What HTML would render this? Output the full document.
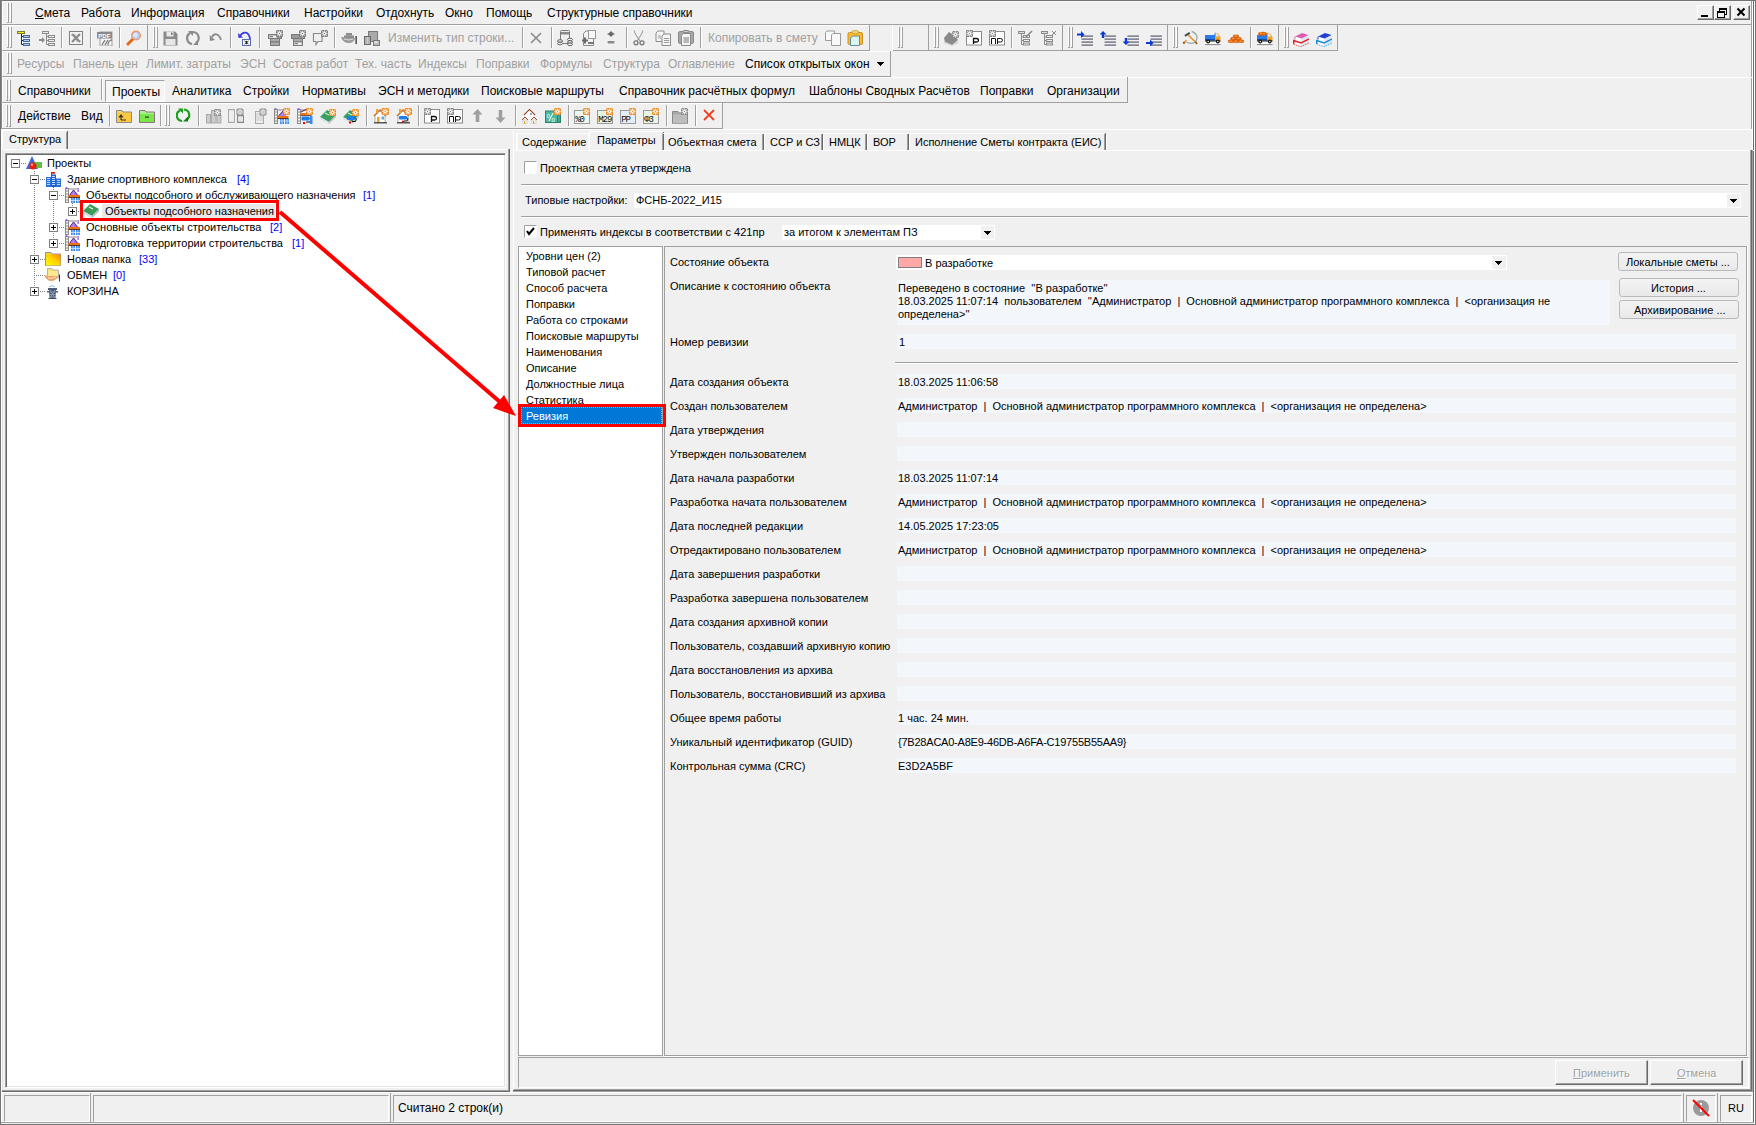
<!DOCTYPE html>
<html><head><meta charset="utf-8"><style>
html,body{margin:0;padding:0;width:1756px;height:1125px;overflow:hidden;background:#f0f0f0;}
body{position:relative;font-family:"Liberation Sans",sans-serif;}
div{position:absolute;}
.t{white-space:pre;}
</style></head><body>
<div style="left:0px;top:0px;width:1756px;height:1px;background:#737373"></div>
<div style="left:1px;top:1px;width:1754px;height:1px;background:#f8f8f8"></div>
<div style="left:0px;top:0px;width:1px;height:1125px;background:#737373"></div>
<div style="left:1px;top:1px;width:1px;height:1123px;background:#ffffff"></div>
<div style="left:1755px;top:0px;width:1px;height:1125px;background:#737373"></div>
<div style="left:1754px;top:1px;width:1px;height:1123px;background:#ffffff"></div>
<div style="left:1753px;top:1px;width:1px;height:1123px;background:#696969"></div>
<div style="left:1752px;top:1px;width:1px;height:149px;background:#ffffff"></div>
<div style="left:1751px;top:1px;width:1px;height:128px;background:#a0a0a0"></div>
<div style="left:2px;top:2px;width:1px;height:127px;background:#ffffff"></div>
<div style="left:1px;top:0px;width:1px;height:129px;background:#8a8a8a"></div>
<div style="left:1px;top:24px;width:1751px;height:1px;background:#a0a0a0"></div>
<div style="left:1px;top:50px;width:1337px;height:1px;background:#a0a0a0"></div>
<div style="left:1px;top:76px;width:889px;height:1px;background:#a0a0a0"></div>
<div style="left:1px;top:102px;width:1126px;height:1px;background:#a0a0a0"></div>
<div style="left:1px;top:128px;width:721px;height:1px;background:#a0a0a0"></div>
<div style="left:2px;top:25px;width:867px;height:1px;background:#ffffff"></div>
<div style="left:2px;top:51px;width:888px;height:1px;background:#ffffff"></div>
<div style="left:2px;top:103px;width:720px;height:1px;background:#ffffff"></div>
<div style="left:7px;top:3px;width:1px;height:20px;background:#ffffff"></div>
<div style="left:8px;top:3px;width:1px;height:20px;background:#a0a0a0"></div>
<div style="left:7px;top:22px;width:1px;height:1px;background:#a0a0a0"></div>
<div style="left:10px;top:3px;width:1px;height:20px;background:#ffffff"></div>
<div style="left:11px;top:3px;width:1px;height:20px;background:#a0a0a0"></div>
<div style="left:10px;top:22px;width:1px;height:1px;background:#a0a0a0"></div>
<div class="t" style="left:35px;top:5.84px;font-size:12px;line-height:14px;color:#000;"><u>С</u>мета</div>
<div class="t" style="left:81px;top:5.84px;font-size:12px;line-height:14px;color:#000;">Работа</div>
<div class="t" style="left:131px;top:5.84px;font-size:12px;line-height:14px;color:#000;">Информация</div>
<div class="t" style="left:217px;top:5.84px;font-size:12px;line-height:14px;color:#000;">Справочники</div>
<div class="t" style="left:304px;top:5.84px;font-size:12px;line-height:14px;color:#000;">Настройки</div>
<div class="t" style="left:376px;top:5.84px;font-size:12px;line-height:14px;color:#000;">Отдохнуть</div>
<div class="t" style="left:445px;top:5.84px;font-size:12px;line-height:14px;color:#000;">Окно</div>
<div class="t" style="left:486px;top:5.84px;font-size:12px;line-height:14px;color:#000;">Помощь</div>
<div class="t" style="left:547px;top:5.84px;font-size:12px;line-height:14px;color:#000;">Структурные справочники</div>
<div style="left:1697px;top:5px;width:17px;height:15px;background:#f0f0f0;border-top:1px solid #fff;border-left:1px solid #fff;border-right:1px solid #696969;border-bottom:1px solid #696969;box-sizing:border-box;box-shadow:inset -1px -1px 0 #a0a0a0"></div>
<svg style="position:absolute;left:1697px;top:5px" width="17" height="15" viewBox="0 0 17 15"><rect x="4" y="10" width="7" height="2" fill="#000"/></svg>
<div style="left:1714px;top:5px;width:17px;height:15px;background:#f0f0f0;border-top:1px solid #fff;border-left:1px solid #fff;border-right:1px solid #696969;border-bottom:1px solid #696969;box-sizing:border-box;box-shadow:inset -1px -1px 0 #a0a0a0"></div>
<svg style="position:absolute;left:1714px;top:5px" width="17" height="15" viewBox="0 0 17 15"><rect x="5.5" y="3.5" width="7" height="6" fill="none" stroke="#000" stroke-width="1"/><rect x="5" y="3" width="8" height="2" fill="#000"/><rect x="3.5" y="6.5" width="7" height="6" fill="#f0f0f0" stroke="#000" stroke-width="1"/><rect x="3" y="6" width="8" height="2" fill="#000"/></svg>
<div style="left:1733px;top:5px;width:17px;height:15px;background:#f0f0f0;border-top:1px solid #fff;border-left:1px solid #fff;border-right:1px solid #696969;border-bottom:1px solid #696969;box-sizing:border-box;box-shadow:inset -1px -1px 0 #a0a0a0"></div>
<svg style="position:absolute;left:1733px;top:5px" width="17" height="15" viewBox="0 0 17 15"><path d="M4.5 3.5 L11.5 10.5 M11.5 3.5 L4.5 10.5" stroke="#000" stroke-width="2"/></svg>
<div style="left:7px;top:27px;width:1px;height:21px;background:#ffffff"></div>
<div style="left:8px;top:27px;width:1px;height:21px;background:#a0a0a0"></div>
<div style="left:7px;top:47px;width:1px;height:1px;background:#a0a0a0"></div>
<div style="left:10px;top:27px;width:1px;height:21px;background:#ffffff"></div>
<div style="left:11px;top:27px;width:1px;height:21px;background:#a0a0a0"></div>
<div style="left:10px;top:47px;width:1px;height:1px;background:#a0a0a0"></div>
<div style="left:869px;top:25px;width:1px;height:26px;background:#a0a0a0"></div>
<div class="t" style="left:388px;top:30.84px;font-size:12px;line-height:14px;color:#a0a0a0;">Изменить тип строки...</div>
<div class="t" style="left:708px;top:30.84px;font-size:12px;line-height:14px;color:#a0a0a0;">Копировать в смету</div>
<div style="left:61px;top:27px;width:1px;height:21px;background:#a0a0a0"></div>
<div style="left:62px;top:27px;width:1px;height:21px;background:#ffffff"></div>
<div style="left:90px;top:27px;width:1px;height:21px;background:#a0a0a0"></div>
<div style="left:91px;top:27px;width:1px;height:21px;background:#ffffff"></div>
<div style="left:119px;top:27px;width:1px;height:21px;background:#a0a0a0"></div>
<div style="left:120px;top:27px;width:1px;height:21px;background:#ffffff"></div>
<div style="left:230px;top:27px;width:1px;height:21px;background:#a0a0a0"></div>
<div style="left:231px;top:27px;width:1px;height:21px;background:#ffffff"></div>
<div style="left:259px;top:27px;width:1px;height:21px;background:#a0a0a0"></div>
<div style="left:260px;top:27px;width:1px;height:21px;background:#ffffff"></div>
<div style="left:334px;top:27px;width:1px;height:21px;background:#a0a0a0"></div>
<div style="left:335px;top:27px;width:1px;height:21px;background:#ffffff"></div>
<div style="left:522px;top:27px;width:1px;height:21px;background:#a0a0a0"></div>
<div style="left:523px;top:27px;width:1px;height:21px;background:#ffffff"></div>
<div style="left:551px;top:27px;width:1px;height:21px;background:#a0a0a0"></div>
<div style="left:552px;top:27px;width:1px;height:21px;background:#ffffff"></div>
<div style="left:626px;top:27px;width:1px;height:21px;background:#a0a0a0"></div>
<div style="left:627px;top:27px;width:1px;height:21px;background:#ffffff"></div>
<div style="left:700px;top:27px;width:1px;height:21px;background:#a0a0a0"></div>
<div style="left:701px;top:27px;width:1px;height:21px;background:#ffffff"></div>
<div style="left:147px;top:25px;width:1px;height:26px;background:#a0a0a0"></div>
<div style="left:153px;top:27px;width:1px;height:21px;background:#ffffff"></div>
<div style="left:154px;top:27px;width:1px;height:21px;background:#a0a0a0"></div>
<div style="left:153px;top:47px;width:1px;height:1px;background:#a0a0a0"></div>
<div style="left:156px;top:27px;width:1px;height:21px;background:#ffffff"></div>
<div style="left:157px;top:27px;width:1px;height:21px;background:#a0a0a0"></div>
<div style="left:156px;top:47px;width:1px;height:1px;background:#a0a0a0"></div>
<div style="left:892px;top:25px;width:1px;height:26px;background:#ffffff"></div>
<div style="left:898px;top:27px;width:1px;height:21px;background:#ffffff"></div>
<div style="left:899px;top:27px;width:1px;height:21px;background:#a0a0a0"></div>
<div style="left:898px;top:47px;width:1px;height:1px;background:#a0a0a0"></div>
<div style="left:901px;top:27px;width:1px;height:21px;background:#ffffff"></div>
<div style="left:902px;top:27px;width:1px;height:21px;background:#a0a0a0"></div>
<div style="left:901px;top:47px;width:1px;height:1px;background:#a0a0a0"></div>
<div style="left:928px;top:25px;width:1px;height:26px;background:#a0a0a0"></div>
<div style="left:934px;top:27px;width:1px;height:21px;background:#ffffff"></div>
<div style="left:935px;top:27px;width:1px;height:21px;background:#a0a0a0"></div>
<div style="left:934px;top:47px;width:1px;height:1px;background:#a0a0a0"></div>
<div style="left:937px;top:27px;width:1px;height:21px;background:#ffffff"></div>
<div style="left:938px;top:27px;width:1px;height:21px;background:#a0a0a0"></div>
<div style="left:937px;top:47px;width:1px;height:1px;background:#a0a0a0"></div>
<div style="left:1011px;top:27px;width:1px;height:21px;background:#a0a0a0"></div>
<div style="left:1012px;top:27px;width:1px;height:21px;background:#ffffff"></div>
<div style="left:1062px;top:25px;width:1px;height:26px;background:#a0a0a0"></div>
<div style="left:1068px;top:27px;width:1px;height:21px;background:#ffffff"></div>
<div style="left:1069px;top:27px;width:1px;height:21px;background:#a0a0a0"></div>
<div style="left:1068px;top:47px;width:1px;height:1px;background:#a0a0a0"></div>
<div style="left:1071px;top:27px;width:1px;height:21px;background:#ffffff"></div>
<div style="left:1072px;top:27px;width:1px;height:21px;background:#a0a0a0"></div>
<div style="left:1071px;top:47px;width:1px;height:1px;background:#a0a0a0"></div>
<div style="left:1167px;top:25px;width:1px;height:26px;background:#a0a0a0"></div>
<div style="left:1173px;top:27px;width:1px;height:21px;background:#ffffff"></div>
<div style="left:1174px;top:27px;width:1px;height:21px;background:#a0a0a0"></div>
<div style="left:1173px;top:47px;width:1px;height:1px;background:#a0a0a0"></div>
<div style="left:1176px;top:27px;width:1px;height:21px;background:#ffffff"></div>
<div style="left:1177px;top:27px;width:1px;height:21px;background:#a0a0a0"></div>
<div style="left:1176px;top:47px;width:1px;height:1px;background:#a0a0a0"></div>
<div style="left:1250px;top:27px;width:1px;height:21px;background:#a0a0a0"></div>
<div style="left:1251px;top:27px;width:1px;height:21px;background:#ffffff"></div>
<div style="left:1278px;top:25px;width:1px;height:26px;background:#a0a0a0"></div>
<div style="left:1284px;top:27px;width:1px;height:21px;background:#ffffff"></div>
<div style="left:1285px;top:27px;width:1px;height:21px;background:#a0a0a0"></div>
<div style="left:1284px;top:47px;width:1px;height:1px;background:#a0a0a0"></div>
<div style="left:1287px;top:27px;width:1px;height:21px;background:#ffffff"></div>
<div style="left:1288px;top:27px;width:1px;height:21px;background:#a0a0a0"></div>
<div style="left:1287px;top:47px;width:1px;height:1px;background:#a0a0a0"></div>
<div style="left:1337px;top:25px;width:1px;height:26px;background:#a0a0a0"></div>
<div style="left:870px;top:50px;width:22px;height:1px;background:#f0f0f0"></div>
<div style="left:7px;top:53px;width:1px;height:21px;background:#ffffff"></div>
<div style="left:8px;top:53px;width:1px;height:21px;background:#a0a0a0"></div>
<div style="left:7px;top:73px;width:1px;height:1px;background:#a0a0a0"></div>
<div style="left:10px;top:53px;width:1px;height:21px;background:#ffffff"></div>
<div style="left:11px;top:53px;width:1px;height:21px;background:#a0a0a0"></div>
<div style="left:10px;top:73px;width:1px;height:1px;background:#a0a0a0"></div>
<div class="t" style="left:17px;top:56.84px;font-size:12px;line-height:14px;color:#a0a0a0;">Ресурсы</div>
<div class="t" style="left:73px;top:56.84px;font-size:12px;line-height:14px;color:#a0a0a0;">Панель цен</div>
<div class="t" style="left:146px;top:56.84px;font-size:12px;line-height:14px;color:#a0a0a0;">Лимит. затраты</div>
<div class="t" style="left:240px;top:56.84px;font-size:12px;line-height:14px;color:#a0a0a0;">ЭСН</div>
<div class="t" style="left:273px;top:56.84px;font-size:12px;line-height:14px;color:#a0a0a0;">Состав работ</div>
<div class="t" style="left:355px;top:56.84px;font-size:12px;line-height:14px;color:#a0a0a0;">Тех. часть</div>
<div class="t" style="left:418px;top:56.84px;font-size:12px;line-height:14px;color:#a0a0a0;">Индексы</div>
<div class="t" style="left:476px;top:56.84px;font-size:12px;line-height:14px;color:#a0a0a0;">Поправки</div>
<div class="t" style="left:540px;top:56.84px;font-size:12px;line-height:14px;color:#a0a0a0;">Формулы</div>
<div class="t" style="left:603px;top:56.84px;font-size:12px;line-height:14px;color:#a0a0a0;">Структура</div>
<div class="t" style="left:668px;top:56.84px;font-size:12px;line-height:14px;color:#a0a0a0;">Оглавление</div>
<div class="t" style="left:745px;top:56.84px;font-size:12px;line-height:14px;color:#000;">Список открытых окон</div>
<div style="left:877px;top:62px;width:7px;height:1px;background:#000"></div>
<div style="left:878px;top:63px;width:5px;height:1px;background:#000"></div>
<div style="left:879px;top:64px;width:3px;height:1px;background:#000"></div>
<div style="left:880px;top:65px;width:1px;height:1px;background:#000"></div>
<div style="left:890px;top:51px;width:1px;height:26px;background:#a0a0a0"></div>
<div style="left:2px;top:77px;width:1750px;height:1px;background:#ffffff"></div>
<div style="left:6px;top:80px;width:1px;height:21px;background:#ffffff"></div>
<div style="left:7px;top:80px;width:1px;height:21px;background:#a0a0a0"></div>
<div style="left:6px;top:100px;width:1px;height:1px;background:#a0a0a0"></div>
<div style="left:9px;top:80px;width:1px;height:21px;background:#ffffff"></div>
<div style="left:10px;top:80px;width:1px;height:21px;background:#a0a0a0"></div>
<div style="left:9px;top:100px;width:1px;height:1px;background:#a0a0a0"></div>
<div class="t" style="left:18px;top:83.84px;font-size:12px;line-height:14px;color:#000;">Справочники</div>
<div style="left:101px;top:79px;width:1px;height:21px;background:#a0a0a0"></div>
<div style="left:102px;top:79px;width:1px;height:21px;background:#ffffff"></div>
<div style="left:105px;top:80px;width:60px;height:22px;border-top:1px solid #a0a0a0;border-left:1px solid #a0a0a0;border-bottom:1px solid #fff;border-right:1px solid #fff;box-sizing:border-box;background:#f5f5f5"></div>
<div class="t" style="left:112px;top:84.84px;font-size:12px;line-height:14px;color:#000;">Проекты</div>
<div class="t" style="left:172px;top:83.84px;font-size:12px;line-height:14px;color:#000;">Аналитика</div>
<div class="t" style="left:243px;top:83.84px;font-size:12px;line-height:14px;color:#000;">Стройки</div>
<div class="t" style="left:302px;top:83.84px;font-size:12px;line-height:14px;color:#000;">Нормативы</div>
<div class="t" style="left:378px;top:83.84px;font-size:12px;line-height:14px;color:#000;">ЭСН и методики</div>
<div class="t" style="left:481px;top:83.84px;font-size:12px;line-height:14px;color:#000;">Поисковые маршруты</div>
<div class="t" style="left:619px;top:83.84px;font-size:12px;line-height:14px;color:#000;">Справочник расчётных формул</div>
<div class="t" style="left:809px;top:83.84px;font-size:12px;line-height:14px;color:#000;">Шаблоны Сводных Расчётов</div>
<div class="t" style="left:980px;top:83.84px;font-size:12px;line-height:14px;color:#000;">Поправки</div>
<div class="t" style="left:1047px;top:83.84px;font-size:12px;line-height:14px;color:#000;">Организации</div>
<div style="left:1127px;top:77px;width:1px;height:26px;background:#a0a0a0"></div>
<div style="left:6px;top:105px;width:1px;height:22px;background:#ffffff"></div>
<div style="left:7px;top:105px;width:1px;height:22px;background:#a0a0a0"></div>
<div style="left:6px;top:126px;width:1px;height:1px;background:#a0a0a0"></div>
<div style="left:9px;top:105px;width:1px;height:22px;background:#ffffff"></div>
<div style="left:10px;top:105px;width:1px;height:22px;background:#a0a0a0"></div>
<div style="left:9px;top:126px;width:1px;height:1px;background:#a0a0a0"></div>
<div class="t" style="left:18px;top:108.84px;font-size:12px;line-height:14px;color:#000;">Действие</div>
<div class="t" style="left:81px;top:108.84px;font-size:12px;line-height:14px;color:#000;">Вид</div>
<div style="left:109px;top:105px;width:1px;height:21px;background:#a0a0a0"></div>
<div style="left:110px;top:105px;width:1px;height:21px;background:#ffffff"></div>
<div style="left:160px;top:105px;width:1px;height:21px;background:#a0a0a0"></div>
<div style="left:161px;top:105px;width:1px;height:21px;background:#ffffff"></div>
<div style="left:165px;top:105px;width:1px;height:21px;background:#ffffff"></div>
<div style="left:166px;top:105px;width:1px;height:21px;background:#a0a0a0"></div>
<div style="left:165px;top:125px;width:1px;height:1px;background:#a0a0a0"></div>
<div style="left:168px;top:105px;width:1px;height:21px;background:#ffffff"></div>
<div style="left:169px;top:105px;width:1px;height:21px;background:#a0a0a0"></div>
<div style="left:168px;top:125px;width:1px;height:1px;background:#a0a0a0"></div>
<div style="left:198px;top:105px;width:1px;height:21px;background:#a0a0a0"></div>
<div style="left:199px;top:105px;width:1px;height:21px;background:#ffffff"></div>
<div style="left:366px;top:105px;width:1px;height:21px;background:#a0a0a0"></div>
<div style="left:367px;top:105px;width:1px;height:21px;background:#ffffff"></div>
<div style="left:418px;top:105px;width:1px;height:21px;background:#a0a0a0"></div>
<div style="left:419px;top:105px;width:1px;height:21px;background:#ffffff"></div>
<div style="left:515px;top:105px;width:1px;height:21px;background:#a0a0a0"></div>
<div style="left:516px;top:105px;width:1px;height:21px;background:#ffffff"></div>
<div style="left:568px;top:105px;width:1px;height:21px;background:#a0a0a0"></div>
<div style="left:569px;top:105px;width:1px;height:21px;background:#ffffff"></div>
<div style="left:666px;top:105px;width:1px;height:21px;background:#a0a0a0"></div>
<div style="left:667px;top:105px;width:1px;height:21px;background:#ffffff"></div>
<div style="left:695px;top:105px;width:1px;height:21px;background:#a0a0a0"></div>
<div style="left:696px;top:105px;width:1px;height:21px;background:#ffffff"></div>
<div style="left:722px;top:103px;width:1px;height:26px;background:#a0a0a0"></div>
<div style="left:2px;top:129px;width:1750px;height:1px;background:#ffffff"></div>
<div style="left:2px;top:130px;width:65px;height:20px;border-top:1px solid #fff;border-left:1px solid #fff;box-sizing:border-box"></div>
<div style="left:67px;top:131px;width:1px;height:19px;background:#696969"></div>
<div style="left:66px;top:132px;width:1px;height:18px;background:#a0a0a0"></div>
<div class="t" style="left:9px;top:132.69px;font-size:11px;line-height:13px;color:#000;">Структура</div>
<div style="left:2px;top:149px;width:508px;height:1px;background:#ffffff"></div>
<div style="left:2px;top:149px;width:1px;height:943px;background:#e3e3e3"></div>
<div style="left:508px;top:149px;width:1px;height:942px;background:#a0a0a0"></div>
<div style="left:509px;top:149px;width:1px;height:943px;background:#696969"></div>
<div style="left:2px;top:1090px;width:507px;height:1px;background:#a0a0a0"></div>
<div style="left:2px;top:1091px;width:508px;height:1px;background:#696969"></div>
<div style="left:5px;top:153px;width:501px;height:935px;background:#fff;border-top:1px solid #a0a0a0;border-left:1px solid #a0a0a0;border-right:1px solid #fff;border-bottom:1px solid #fff;box-sizing:border-box;box-shadow:inset 1px 1px 0 #696969, inset -1px -1px 0 #e3e3e3"></div>
<div style="left:34px;top:171px;width:1px;height:4px;background:repeating-linear-gradient(180deg,#808080 0 1px,transparent 1px 2px)"></div>
<div style="left:34px;top:185px;width:1px;height:102px;background:repeating-linear-gradient(180deg,#808080 0 1px,transparent 1px 2px)"></div>
<div style="left:53px;top:187px;width:1px;height:4px;background:repeating-linear-gradient(180deg,#808080 0 1px,transparent 1px 2px)"></div>
<div style="left:53px;top:201px;width:1px;height:42px;background:repeating-linear-gradient(180deg,#808080 0 1px,transparent 1px 2px)"></div>
<div style="left:72px;top:203px;width:1px;height:4px;background:repeating-linear-gradient(180deg,#808080 0 1px,transparent 1px 2px)"></div>
<svg style="position:absolute;left:11px;top:159px" width="9" height="9" viewBox="0 0 9 9"><rect x="0.5" y="0.5" width="8" height="8" fill="#fff" stroke="#808080"/><path d="M2 4.5 H7" stroke="#000"/></svg>
<div style="left:21px;top:163px;width:5px;height:1px;background:repeating-linear-gradient(90deg,#808080 0 1px,transparent 1px 2px)"></div>
<div class="t" style="left:47px;top:156.69px;font-size:11px;line-height:13px;color:#000;">Проекты</div>
<svg style="position:absolute;left:30px;top:175px" width="9" height="9" viewBox="0 0 9 9"><rect x="0.5" y="0.5" width="8" height="8" fill="#fff" stroke="#808080"/><path d="M2 4.5 H7" stroke="#000"/></svg>
<div style="left:40px;top:179px;width:6px;height:1px;background:repeating-linear-gradient(90deg,#808080 0 1px,transparent 1px 2px)"></div>
<div class="t" style="left:67px;top:172.69px;font-size:11px;line-height:13px;color:#000;">Здание спортивного комплекса</div>
<div class="t" style="left:237px;top:172.69px;font-size:11px;line-height:13px;color:#0000ff;">[4]</div>
<svg style="position:absolute;left:49px;top:191px" width="9" height="9" viewBox="0 0 9 9"><rect x="0.5" y="0.5" width="8" height="8" fill="#fff" stroke="#808080"/><path d="M2 4.5 H7" stroke="#000"/></svg>
<div style="left:59px;top:195px;width:6px;height:1px;background:repeating-linear-gradient(90deg,#808080 0 1px,transparent 1px 2px)"></div>
<div class="t" style="left:86px;top:188.69px;font-size:11px;line-height:13px;color:#000;">Объекты подсобного и обслуживающего назначения</div>
<div class="t" style="left:363px;top:188.69px;font-size:11px;line-height:13px;color:#0000ff;">[1]</div>
<svg style="position:absolute;left:68px;top:207px" width="9" height="9" viewBox="0 0 9 9"><rect x="0.5" y="0.5" width="8" height="8" fill="#fff" stroke="#808080"/><path d="M2 4.5 H7" stroke="#000"/><path d="M4.5 2 V7" stroke="#000"/></svg>
<div style="left:78px;top:211px;width:5px;height:1px;background:repeating-linear-gradient(90deg,#808080 0 1px,transparent 1px 2px)"></div>
<div style="left:102px;top:204px;width:173px;height:16px;background:#e8e8e8"></div>
<div class="t" style="left:105px;top:204.69px;font-size:11px;line-height:13px;color:#000;">Объекты подсобного назначения</div>
<svg style="position:absolute;left:49px;top:223px" width="9" height="9" viewBox="0 0 9 9"><rect x="0.5" y="0.5" width="8" height="8" fill="#fff" stroke="#808080"/><path d="M2 4.5 H7" stroke="#000"/><path d="M4.5 2 V7" stroke="#000"/></svg>
<div style="left:59px;top:227px;width:6px;height:1px;background:repeating-linear-gradient(90deg,#808080 0 1px,transparent 1px 2px)"></div>
<div class="t" style="left:86px;top:220.69px;font-size:11px;line-height:13px;color:#000;">Основные объекты строительства</div>
<div class="t" style="left:270px;top:220.69px;font-size:11px;line-height:13px;color:#0000ff;">[2]</div>
<svg style="position:absolute;left:49px;top:239px" width="9" height="9" viewBox="0 0 9 9"><rect x="0.5" y="0.5" width="8" height="8" fill="#fff" stroke="#808080"/><path d="M2 4.5 H7" stroke="#000"/><path d="M4.5 2 V7" stroke="#000"/></svg>
<div style="left:59px;top:243px;width:6px;height:1px;background:repeating-linear-gradient(90deg,#808080 0 1px,transparent 1px 2px)"></div>
<div class="t" style="left:86px;top:236.69px;font-size:11px;line-height:13px;color:#000;">Подготовка территории строительства</div>
<div class="t" style="left:292px;top:236.69px;font-size:11px;line-height:13px;color:#0000ff;">[1]</div>
<svg style="position:absolute;left:30px;top:255px" width="9" height="9" viewBox="0 0 9 9"><rect x="0.5" y="0.5" width="8" height="8" fill="#fff" stroke="#808080"/><path d="M2 4.5 H7" stroke="#000"/><path d="M4.5 2 V7" stroke="#000"/></svg>
<div style="left:40px;top:259px;width:6px;height:1px;background:repeating-linear-gradient(90deg,#808080 0 1px,transparent 1px 2px)"></div>
<div class="t" style="left:67px;top:252.69px;font-size:11px;line-height:13px;color:#000;">Новая папка</div>
<div class="t" style="left:139px;top:252.69px;font-size:11px;line-height:13px;color:#0000ff;">[33]</div>
<div style="left:34px;top:275px;width:12px;height:1px;background:repeating-linear-gradient(90deg,#808080 0 1px,transparent 1px 2px)"></div>
<div class="t" style="left:67px;top:268.69px;font-size:11px;line-height:13px;color:#000;">ОБМЕН</div>
<div class="t" style="left:113px;top:268.69px;font-size:11px;line-height:13px;color:#0000ff;">[0]</div>
<svg style="position:absolute;left:30px;top:287px" width="9" height="9" viewBox="0 0 9 9"><rect x="0.5" y="0.5" width="8" height="8" fill="#fff" stroke="#808080"/><path d="M2 4.5 H7" stroke="#000"/><path d="M4.5 2 V7" stroke="#000"/></svg>
<div style="left:40px;top:291px;width:6px;height:1px;background:repeating-linear-gradient(90deg,#808080 0 1px,transparent 1px 2px)"></div>
<div class="t" style="left:67px;top:284.69px;font-size:11px;line-height:13px;color:#000;">КОРЗИНА</div>
<div style="left:517px;top:133px;width:72px;height:17px;border-top:1px solid #fafafa;border-left:1px solid #fafafa;border-right:1px solid #fafafa;box-sizing:border-box"></div>
<div class="t" style="left:522px;top:135.69px;font-size:11px;line-height:13px;color:#000;">Содержание</div>
<div style="left:589px;top:131px;width:74px;height:20px;background:#f0f0f0;border-top:1px solid #fff;border-left:1px solid #fff;box-sizing:border-box"></div>
<div style="left:663px;top:132px;width:1px;height:19px;background:#696969"></div>
<div style="left:662px;top:133px;width:1px;height:18px;background:#a0a0a0"></div>
<div class="t" style="left:597px;top:133.69px;font-size:11px;line-height:13px;color:#000;">Параметры</div>
<div style="left:663px;top:133px;width:100px;height:17px;border-top:1px solid #fafafa;box-sizing:border-box"></div>
<div style="left:763px;top:133px;width:1px;height:17px;background:#696969"></div>
<div style="left:762px;top:134px;width:1px;height:16px;background:#a0a0a0"></div>
<div style="left:764px;top:133px;width:1px;height:17px;background:#ffffff"></div>
<div class="t" style="left:668px;top:135.69px;font-size:11px;line-height:13px;color:#000;">Объектная смета</div>
<div style="left:763px;top:133px;width:59px;height:17px;border-top:1px solid #fafafa;box-sizing:border-box"></div>
<div style="left:822px;top:133px;width:1px;height:17px;background:#696969"></div>
<div style="left:821px;top:134px;width:1px;height:16px;background:#a0a0a0"></div>
<div style="left:823px;top:133px;width:1px;height:17px;background:#ffffff"></div>
<div class="t" style="left:770px;top:135.69px;font-size:11px;line-height:13px;color:#000;">ССР и СЗ</div>
<div style="left:822px;top:133px;width:44px;height:17px;border-top:1px solid #fafafa;box-sizing:border-box"></div>
<div style="left:866px;top:133px;width:1px;height:17px;background:#696969"></div>
<div style="left:865px;top:134px;width:1px;height:16px;background:#a0a0a0"></div>
<div style="left:867px;top:133px;width:1px;height:17px;background:#ffffff"></div>
<div class="t" style="left:829px;top:135.69px;font-size:11px;line-height:13px;color:#000;">НМЦК</div>
<div style="left:866px;top:133px;width:42px;height:17px;border-top:1px solid #fafafa;box-sizing:border-box"></div>
<div style="left:908px;top:133px;width:1px;height:17px;background:#696969"></div>
<div style="left:907px;top:134px;width:1px;height:16px;background:#a0a0a0"></div>
<div style="left:909px;top:133px;width:1px;height:17px;background:#ffffff"></div>
<div class="t" style="left:873px;top:135.69px;font-size:11px;line-height:13px;color:#000;">ВОР</div>
<div style="left:908px;top:133px;width:197px;height:17px;border-top:1px solid #fafafa;box-sizing:border-box"></div>
<div style="left:1105px;top:133px;width:1px;height:17px;background:#696969"></div>
<div style="left:1104px;top:134px;width:1px;height:16px;background:#a0a0a0"></div>
<div style="left:1106px;top:133px;width:1px;height:17px;background:#ffffff"></div>
<div class="t" style="left:915px;top:135.69px;font-size:11px;line-height:13px;color:#000;">Исполнение Сметы контракта (ЕИС)</div>
<div style="left:513px;top:131px;width:1px;height:20px;background:#ffffff"></div>
<div style="left:516px;top:133px;width:1px;height:17px;background:#ffffff"></div>
<div style="left:513px;top:150px;width:1242px;height:1px;background:#ffffff"></div>
<div style="left:513px;top:150px;width:1px;height:941px;background:#ffffff"></div>
<div style="left:1750px;top:150px;width:1px;height:941px;background:#a0a0a0"></div>
<div style="left:1751px;top:150px;width:1px;height:942px;background:#696969"></div>
<div style="left:1752px;top:150px;width:1px;height:942px;background:#a0a0a0"></div>
<div style="left:514px;top:1089px;width:1237px;height:1px;background:#a0a0a0"></div>
<div style="left:513px;top:1090px;width:1239px;height:1px;background:#696969"></div>
<div style="left:513px;top:1091px;width:1240px;height:1px;background:#a0a0a0"></div>
<svg style="position:absolute;left:524px;top:161px" width="13" height="13" viewBox="0 0 13 13"><rect x="0" y="0" width="13" height="13" fill="#fff"/><path d="M0.5 12.5 V0.5 H12.5" stroke="#a0a0a0" fill="none"/><path d="M1.5 11.5 V1.5 H11.5" stroke="#696969" fill="none" stroke-opacity="0"/></svg>
<div class="t" style="left:540px;top:161.69px;font-size:11px;line-height:13px;color:#000;">Проектная смета утверждена</div>
<div style="left:521px;top:184px;width:1227px;height:1px;background:#a0a0a0"></div>
<div style="left:521px;top:185px;width:1227px;height:1px;background:#ffffff"></div>
<div class="t" style="left:525px;top:193.69px;font-size:11px;line-height:13px;color:#000;">Типовые настройки:</div>
<div style="left:634px;top:193px;width:1107px;height:15px;background:#fff"></div>
<div class="t" style="left:636px;top:193.69px;font-size:11px;line-height:13px;color:#000;">ФСНБ-2022_И15</div>
<div style="left:1727px;top:194px;width:13px;height:13px;background:#f0f0f0"></div>
<div style="left:1730px;top:199px;width:7px;height:1px;background:#000"></div>
<div style="left:1731px;top:200px;width:5px;height:1px;background:#000"></div>
<div style="left:1732px;top:201px;width:3px;height:1px;background:#000"></div>
<div style="left:1733px;top:202px;width:1px;height:1px;background:#000"></div>
<div style="left:521px;top:216px;width:1227px;height:1px;background:#a0a0a0"></div>
<div style="left:521px;top:217px;width:1227px;height:1px;background:#ffffff"></div>
<svg style="position:absolute;left:524px;top:225px" width="13" height="13" viewBox="0 0 13 13"><rect x="0" y="0" width="13" height="13" fill="#fff"/><path d="M0.5 12.5 V0.5 H12.5" stroke="#a0a0a0" fill="none"/><path d="M3 6 L5 9 L10 3" stroke="#000" stroke-width="2" fill="none"/></svg>
<div class="t" style="left:540px;top:225.69px;font-size:11px;line-height:13px;color:#000;">Применять индексы в соответствии с 421пр</div>
<div style="left:782px;top:225px;width:213px;height:15px;background:#fff"></div>
<div class="t" style="left:784px;top:225.69px;font-size:11px;line-height:13px;color:#000;">за итогом к элементам ПЗ</div>
<div style="left:981px;top:226px;width:13px;height:13px;background:#f0f0f0"></div>
<div style="left:984px;top:231px;width:7px;height:1px;background:#000"></div>
<div style="left:985px;top:232px;width:5px;height:1px;background:#000"></div>
<div style="left:986px;top:233px;width:3px;height:1px;background:#000"></div>
<div style="left:987px;top:234px;width:1px;height:1px;background:#000"></div>
<div style="left:518px;top:246px;width:145px;height:810px;background:#fff;border:1px solid #a0a0a0;box-sizing:border-box"></div>
<div class="t" style="left:526px;top:249.69px;font-size:11px;line-height:13px;color:#000;">Уровни цен (2)</div>
<div class="t" style="left:526px;top:265.69px;font-size:11px;line-height:13px;color:#000;">Типовой расчет</div>
<div class="t" style="left:526px;top:281.69px;font-size:11px;line-height:13px;color:#000;">Способ расчета</div>
<div class="t" style="left:526px;top:297.69px;font-size:11px;line-height:13px;color:#000;">Поправки</div>
<div class="t" style="left:526px;top:313.69px;font-size:11px;line-height:13px;color:#000;">Работа со строками</div>
<div class="t" style="left:526px;top:329.69px;font-size:11px;line-height:13px;color:#000;">Поисковые маршруты</div>
<div class="t" style="left:526px;top:345.69px;font-size:11px;line-height:13px;color:#000;">Наименования</div>
<div class="t" style="left:526px;top:361.69px;font-size:11px;line-height:13px;color:#000;">Описание</div>
<div class="t" style="left:526px;top:377.69px;font-size:11px;line-height:13px;color:#000;">Должностные лица</div>
<div class="t" style="left:526px;top:393.69px;font-size:11px;line-height:13px;color:#000;">Статистика</div>
<div style="left:521px;top:407px;width:141px;height:17px;background:#0078d7"></div>
<div style="left:521px;top:407px;width:141px;height:17px;border:1px dotted #f0a030;box-sizing:border-box"></div>
<div class="t" style="left:526px;top:409.69px;font-size:11px;line-height:13px;color:#fff;">Ревизия</div>
<div style="left:664px;top:246px;width:1083px;height:810px;border:1px solid #a0a0a0;border-right-color:#a0a0a0;box-sizing:border-box"></div>
<div class="t" style="left:670px;top:255.69px;font-size:11px;line-height:13px;color:#000;">Состояние объекта</div>
<div style="left:896px;top:255px;width:611px;height:15px;background:#fff"></div>
<div style="left:898px;top:257px;width:24px;height:11px;background:#ffa8a8;border:1px solid #808080;box-sizing:border-box"></div>
<div class="t" style="left:925px;top:256.69px;font-size:11px;line-height:13px;color:#000;">В разработке</div>
<div style="left:1492px;top:256px;width:14px;height:13px;background:#f0f0f0"></div>
<div style="left:1495px;top:261px;width:7px;height:1px;background:#000"></div>
<div style="left:1496px;top:262px;width:5px;height:1px;background:#000"></div>
<div style="left:1497px;top:263px;width:3px;height:1px;background:#000"></div>
<div style="left:1498px;top:264px;width:1px;height:1px;background:#000"></div>
<div class="t" style="left:670px;top:279.69px;font-size:11px;line-height:13px;color:#000;">Описание к состоянию объекта</div>
<div style="left:897px;top:280px;width:713px;height:45px;background:#f3f6fa"></div>
<div class="t" style="left:898px;top:281.69px;font-size:11px;line-height:13px;color:#000;">Переведено в состояние&nbsp; ''В разработке''</div>
<div class="t" style="left:898px;top:294.69px;font-size:11px;line-height:13px;color:#000;">18.03.2025 11:07:14&nbsp; пользователем&nbsp; ''Администратор&nbsp; |&nbsp; Основной администратор программного комплекса&nbsp; |&nbsp; &lt;организация не</div>
<div class="t" style="left:898px;top:307.69px;font-size:11px;line-height:13px;color:#000;">определена&gt;''</div>
<div class="t" style="left:670px;top:335.69px;font-size:11px;line-height:13px;color:#000;">Номер ревизии</div>
<div style="left:897px;top:334px;width:839px;height:15px;background:#f3f6fa"></div>
<div class="t" style="left:899px;top:335.69px;font-size:11px;line-height:13px;color:#000;">1</div>
<div style="left:895px;top:362px;width:843px;height:1px;background:#a0a0a0"></div>
<div style="left:895px;top:363px;width:843px;height:1px;background:#ffffff"></div>
<div class="t" style="left:670px;top:375.69px;font-size:11px;line-height:13px;color:#000;">Дата создания объекта</div>
<div style="left:897px;top:374px;width:839px;height:15px;background:#f3f6fa"></div>
<div class="t" style="left:898px;top:375.69px;font-size:11px;line-height:13px;color:#000;">18.03.2025 11:06:58</div>
<div class="t" style="left:670px;top:399.69px;font-size:11px;line-height:13px;color:#000;">Создан пользователем</div>
<div style="left:897px;top:398px;width:839px;height:15px;background:#f3f6fa"></div>
<div class="t" style="left:898px;top:399.69px;font-size:11px;line-height:13px;color:#000;">Администратор&nbsp; |&nbsp; Основной администратор программного комплекса&nbsp; |&nbsp; &lt;организация не определена&gt;</div>
<div class="t" style="left:670px;top:423.69px;font-size:11px;line-height:13px;color:#000;">Дата утверждения</div>
<div style="left:897px;top:422px;width:839px;height:15px;background:#f3f6fa"></div>
<div class="t" style="left:670px;top:447.69px;font-size:11px;line-height:13px;color:#000;">Утвержден пользователем</div>
<div style="left:897px;top:446px;width:839px;height:15px;background:#f3f6fa"></div>
<div class="t" style="left:670px;top:471.69px;font-size:11px;line-height:13px;color:#000;">Дата начала разработки</div>
<div style="left:897px;top:470px;width:839px;height:15px;background:#f3f6fa"></div>
<div class="t" style="left:898px;top:471.69px;font-size:11px;line-height:13px;color:#000;">18.03.2025 11:07:14</div>
<div class="t" style="left:670px;top:495.69px;font-size:11px;line-height:13px;color:#000;">Разработка начата пользователем</div>
<div style="left:897px;top:494px;width:839px;height:15px;background:#f3f6fa"></div>
<div class="t" style="left:898px;top:495.69px;font-size:11px;line-height:13px;color:#000;">Администратор&nbsp; |&nbsp; Основной администратор программного комплекса&nbsp; |&nbsp; &lt;организация не определена&gt;</div>
<div class="t" style="left:670px;top:519.69px;font-size:11px;line-height:13px;color:#000;">Дата последней редакции</div>
<div style="left:897px;top:518px;width:839px;height:15px;background:#f3f6fa"></div>
<div class="t" style="left:898px;top:519.69px;font-size:11px;line-height:13px;color:#000;">14.05.2025 17:23:05</div>
<div class="t" style="left:670px;top:543.69px;font-size:11px;line-height:13px;color:#000;">Отредактировано пользователем</div>
<div style="left:897px;top:542px;width:839px;height:15px;background:#f3f6fa"></div>
<div class="t" style="left:898px;top:543.69px;font-size:11px;line-height:13px;color:#000;">Администратор&nbsp; |&nbsp; Основной администратор программного комплекса&nbsp; |&nbsp; &lt;организация не определена&gt;</div>
<div class="t" style="left:670px;top:567.69px;font-size:11px;line-height:13px;color:#000;">Дата завершения разработки</div>
<div style="left:897px;top:566px;width:839px;height:15px;background:#f3f6fa"></div>
<div class="t" style="left:670px;top:591.69px;font-size:11px;line-height:13px;color:#000;">Разработка завершена пользователем</div>
<div style="left:897px;top:590px;width:839px;height:15px;background:#f3f6fa"></div>
<div class="t" style="left:670px;top:615.69px;font-size:11px;line-height:13px;color:#000;">Дата создания архивной копии</div>
<div style="left:897px;top:614px;width:839px;height:15px;background:#f3f6fa"></div>
<div class="t" style="left:670px;top:639.69px;font-size:11px;line-height:13px;color:#000;">Пользователь, создавший архивную копию</div>
<div style="left:897px;top:638px;width:839px;height:15px;background:#f3f6fa"></div>
<div class="t" style="left:670px;top:663.69px;font-size:11px;line-height:13px;color:#000;">Дата восстановления из архива</div>
<div style="left:897px;top:662px;width:839px;height:15px;background:#f3f6fa"></div>
<div class="t" style="left:670px;top:687.69px;font-size:11px;line-height:13px;color:#000;">Пользователь, восстановивший из архива</div>
<div style="left:897px;top:686px;width:839px;height:15px;background:#f3f6fa"></div>
<div class="t" style="left:670px;top:711.69px;font-size:11px;line-height:13px;color:#000;">Общее время работы</div>
<div style="left:897px;top:710px;width:839px;height:15px;background:#f3f6fa"></div>
<div class="t" style="left:898px;top:711.69px;font-size:11px;line-height:13px;color:#000;">1 час. 24 мин.</div>
<div class="t" style="left:670px;top:735.69px;font-size:11px;line-height:13px;color:#000;">Уникальный идентификатор (GUID)</div>
<div style="left:897px;top:734px;width:839px;height:15px;background:#f3f6fa"></div>
<div class="t" style="left:898px;top:735.69px;font-size:11px;line-height:13px;color:#000;letter-spacing:-0.22px">{7B28ACA0-A8E9-46DB-A6FA-C19755B55AA9}</div>
<div class="t" style="left:670px;top:759.69px;font-size:11px;line-height:13px;color:#000;">Контрольная сумма (CRC)</div>
<div style="left:897px;top:758px;width:839px;height:15px;background:#f3f6fa"></div>
<div class="t" style="left:898px;top:759.69px;font-size:11px;line-height:13px;color:#000;">E3D2A5BF</div>
<div style="left:1618px;top:252px;width:120px;height:19px;background:linear-gradient(#f3f3f3,#e9e9e9);border:1px solid #b9b9b9;border-radius:3px;box-sizing:border-box"></div>
<div class="t" style="left:1626px;top:255.69px;font-size:11px;line-height:13px;color:#000;">Локальные сметы ...</div>
<div style="left:1619px;top:278px;width:120px;height:19px;background:linear-gradient(#f3f3f3,#e9e9e9);border:1px solid #b9b9b9;border-radius:3px;box-sizing:border-box"></div>
<div class="t" style="left:1651px;top:281.69px;font-size:11px;line-height:13px;color:#000;">История ...</div>
<div style="left:1619px;top:300px;width:120px;height:19px;background:linear-gradient(#f3f3f3,#e9e9e9);border:1px solid #b9b9b9;border-radius:3px;box-sizing:border-box"></div>
<div class="t" style="left:1634px;top:303.69px;font-size:11px;line-height:13px;color:#000;">Архивирование ...</div>
<div style="left:518px;top:1057px;width:1231px;height:31px;border-top:1px solid #a0a0a0;border-left:1px solid #a0a0a0;border-bottom:1px solid #fff;border-right:1px solid #fff;box-sizing:border-box"></div>
<div style="left:1747px;top:246px;width:1px;height:810px;background:#ffffff"></div>
<div style="left:664px;top:1056px;width:1084px;height:1px;background:#ffffff"></div>
<div style="left:1555px;top:1060px;width:93px;height:25px;background:#f0f0f0;border-top:1px solid #fff;border-left:1px solid #fff;border-right:1px solid #696969;border-bottom:1px solid #696969;box-sizing:border-box;box-shadow:inset -1px -1px 0 #a0a0a0"></div>
<div class="t" style="left:1574px;top:1067.69px;font-size:11px;line-height:13px;color:#fff;"><u>П</u>рименить</div>
<div class="t" style="left:1573px;top:1066.69px;font-size:11px;line-height:13px;color:#a0a0a0;"><u>П</u>рименить</div>
<div style="left:1650px;top:1060px;width:93px;height:25px;background:#f0f0f0;border-top:1px solid #fff;border-left:1px solid #fff;border-right:1px solid #696969;border-bottom:1px solid #696969;box-sizing:border-box;box-shadow:inset -1px -1px 0 #a0a0a0"></div>
<div class="t" style="left:1678px;top:1067.69px;font-size:11px;line-height:13px;color:#fff;"><u>О</u>тмена</div>
<div class="t" style="left:1677px;top:1066.69px;font-size:11px;line-height:13px;color:#a0a0a0;"><u>О</u>тмена</div>
<div style="left:2px;top:1092px;width:1750px;height:1px;background:#ffffff"></div>
<div style="left:4px;top:1095px;width:86px;height:27px;border-top:1px solid #a0a0a0;border-left:1px solid #a0a0a0;border-bottom:1px solid #fff;border-right:1px solid #fff;box-sizing:border-box"></div>
<div style="left:93px;top:1095px;width:296px;height:27px;border-top:1px solid #a0a0a0;border-left:1px solid #a0a0a0;border-bottom:1px solid #fff;border-right:1px solid #fff;box-sizing:border-box"></div>
<div style="left:393px;top:1095px;width:1289px;height:27px;border-top:1px solid #a0a0a0;border-left:1px solid #a0a0a0;border-bottom:1px solid #fff;border-right:1px solid #fff;box-sizing:border-box"></div>
<div style="left:1686px;top:1095px;width:30px;height:27px;border-top:1px solid #a0a0a0;border-left:1px solid #a0a0a0;border-bottom:1px solid #fff;border-right:1px solid #fff;box-sizing:border-box"></div>
<div style="left:1720px;top:1095px;width:32px;height:27px;border-top:1px solid #a0a0a0;border-left:1px solid #a0a0a0;border-bottom:1px solid #fff;border-right:1px solid #fff;box-sizing:border-box"></div>
<div style="left:90px;top:1093px;width:1px;height:29px;background:#a0a0a0"></div>
<div style="left:390px;top:1093px;width:1px;height:29px;background:#a0a0a0"></div>
<div style="left:1683px;top:1093px;width:1px;height:29px;background:#a0a0a0"></div>
<div style="left:1717px;top:1093px;width:1px;height:29px;background:#a0a0a0"></div>
<div style="left:1px;top:1122px;width:1753px;height:1px;background:#a0a0a0"></div>
<div style="left:1px;top:1123px;width:1753px;height:1px;background:#f0f0f0"></div>
<div style="left:0px;top:1124px;width:1756px;height:1px;background:#737373"></div>
<div class="t" style="left:398px;top:1100.84px;font-size:12px;line-height:14px;color:#000;">Считано 2 строк(и)</div>
<div class="t" style="left:1728px;top:1101.69px;font-size:11px;line-height:13px;color:#000;">RU</div>
<svg style="position:absolute;left:1692px;top:1099px" width="18" height="18" viewBox="0 0 18 18"><circle cx="9" cy="9" r="8" fill="#9a9a9a"/><rect x="8" y="4" width="2" height="2" fill="#fff"/><rect x="8" y="7" width="2" height="6" fill="#fff"/><path d="M1 1 L17 17" stroke="#ff0000" stroke-width="2"/></svg>
<svg style="position:absolute;left:16px;top:30px" width="16" height="16" viewBox="0 0 16 16"><rect x="1.5" y="1.5" width="7" height="2" fill="#f0f000" stroke="#7a7a30"/><path d="M5.5 4 V14.5 H7 M5.5 6.5 H7 M5.5 10.5 H7" stroke="#1a2a5a" fill="none"/><rect x="7.5" y="5.5" width="6" height="2" fill="#a8ccf4" stroke="#4a6aa0"/><rect x="7.5" y="9.5" width="6" height="2" fill="#a8ccf4" stroke="#4a6aa0"/><rect x="7.5" y="13.5" width="6" height="2" fill="#a8ccf4" stroke="#4a6aa0"/></svg>
<svg style="position:absolute;left:39px;top:30px" width="16" height="16" viewBox="0 0 16 16"><rect x="3.5" y="1.5" width="6" height="2" fill="#eee" stroke="#8a8a8a"/><path d="M7.5 4 V14.5 H9 M7.5 6.5 H9 M7.5 10.5 H9" stroke="#8a8a8a" fill="none"/><rect x="9.5" y="5.5" width="6" height="2" fill="#eee" stroke="#8a8a8a"/><rect x="9.5" y="9.5" width="6" height="2" fill="#eee" stroke="#8a8a8a"/><rect x="9.5" y="13.5" width="6" height="2" fill="#eee" stroke="#8a8a8a"/><path d="M0 9 H3 V7 L6 10 L3 13 V11 H0 Z" fill="#8a8a8a"/></svg>
<svg style="position:absolute;left:68px;top:30px" width="16" height="16" viewBox="0 0 16 16"><rect x="1.5" y="1.5" width="13" height="13" fill="#f4f4f4" stroke="#808080"/><path d="M4 4 L12 12 M12 4 L4 12" stroke="#8a8a8a" stroke-width="2.2"/><path d="M3.5 5 H8 M8 11 H12.5" stroke="#9a9a9a" stroke-width="1"/></svg>
<svg style="position:absolute;left:97px;top:30px" width="16" height="16" viewBox="0 0 16 16"><rect x="3" y="2" width="12" height="14" fill="#f4f4f4" stroke="#a0a0a0"/><rect x="0" y="2" width="15" height="6.5" fill="#8a8a8a"/><text x="1.3" y="7.6" font-family="Liberation Sans" font-weight="bold" font-size="6" fill="#fff">PDF</text><path d="M5 15 L8 10 M8 15 L11 10 M11 15 C11 12 13 10 15 10" stroke="#7a7a7a" stroke-width="1.3" fill="none"/></svg>
<svg style="position:absolute;left:126px;top:30px" width="16" height="16" viewBox="0 0 16 16"><path d="M2 14 L7 9" stroke="#e06a1c" stroke-width="3" stroke-linecap="round"/><circle cx="10" cy="5.5" r="4.3" fill="#b8cdf0" stroke="#f0905a" stroke-width="1.2"/><circle cx="9.5" cy="5" r="2.2" fill="#dfe8fa"/></svg>
<svg style="position:absolute;left:163px;top:30px" width="16" height="16" viewBox="0 0 16 16"><path d="M0.5 1.5 H12 L14.5 4 V15.5 H0.5 Z" fill="#8a8a8a"/><rect x="3.5" y="1.5" width="7" height="5" fill="#eaeaea"/><rect x="8" y="2.5" width="1.5" height="2.5" fill="#777"/><rect x="2.5" y="9" width="10" height="6" fill="#e6e6e6"/></svg>
<svg style="position:absolute;left:186px;top:30px" width="16" height="16" viewBox="0 0 16 16"><path d="M6 14 A6 6 0 0 1 4 3" stroke="#8a8a8a" stroke-width="2.2" fill="none"/><path d="M2 1 H7 V6 Z" fill="#8a8a8a"/><path d="M7 2 A6 6 0 0 1 10 13" stroke="#8a8a8a" stroke-width="2.2" fill="none"/><path d="M7 15 H12 V10 Z" fill="#8a8a8a"/></svg>
<svg style="position:absolute;left:209px;top:30px" width="16" height="16" viewBox="0 0 16 16"><path d="M3 7 C5 3 10 3 12 10" stroke="#8a8a8a" stroke-width="1.8" fill="none"/><path d="M0.5 5 L1 11 L6 10 Z" fill="#8a8a8a"/></svg>
<svg style="position:absolute;left:238px;top:30px" width="16" height="16" viewBox="0 0 16 16"><path d="M2 6 C5 1 11 1 12 9" stroke="#3a3ae8" stroke-width="1.8" fill="none"/><path d="M0 3 L0.5 8 L5 7.5 Z" fill="#3a3ae8"/><rect x="4.5" y="9.5" width="8" height="6" fill="#fff" stroke="#5a6ab0"/><path d="M6.5 11 L10.5 14 M10.5 11 L6.5 14 M8.5 10.8 V14.2" stroke="#222" stroke-width="1"/></svg>
<svg style="position:absolute;left:267px;top:30px" width="16" height="16" viewBox="0 0 16 16"><rect x="1.5" y="4.5" width="13" height="4" fill="#9a9a9a" stroke="#7a7a7a"/><rect x="3.5" y="8.5" width="9" height="3.5" fill="#aaa" stroke="#7a7a7a"/><rect x="3.5" y="12" width="9" height="3.5" fill="#aaa" stroke="#7a7a7a"/><rect x="2.5" y="5.5" width="7" height="2.5" fill="#eee"/><path d="M3 6.7 H6" stroke="#666"/><rect x="9" y="0" width="7" height="7" rx="1.5" fill="#7a7a7a"/><circle cx="12.5" cy="3.5" r="1.68" fill="#fff"/><rect x="11.95" y="0.55" width="1.1" height="1.1" fill="#fff"/><rect x="11.95" y="5.3500000000000005" width="1.1" height="1.1" fill="#fff"/><rect x="9.549999999999999" y="2.95" width="1.1" height="1.1" fill="#fff"/><rect x="14.35" y="2.95" width="1.1" height="1.1" fill="#fff"/><rect x="10.222" y="1.222" width="1.1" height="1.1" fill="#fff"/><rect x="13.677999999999999" y="4.678" width="1.1" height="1.1" fill="#fff"/><rect x="10.222" y="4.678" width="1.1" height="1.1" fill="#fff"/><rect x="13.677999999999999" y="1.222" width="1.1" height="1.1" fill="#fff"/><circle cx="12.5" cy="3.5" r="0.72" fill="#7a7a7a"/></svg>
<svg style="position:absolute;left:290px;top:30px" width="16" height="16" viewBox="0 0 16 16"><rect x="1.5" y="4.5" width="13" height="4" fill="#9a9a9a" stroke="#7a7a7a"/><rect x="3.5" y="8.5" width="9" height="3.5" fill="#aaa" stroke="#7a7a7a"/><rect x="3.5" y="12" width="9" height="3.5" fill="#aaa" stroke="#7a7a7a"/><rect x="4.5" y="12.5" width="7" height="2.5" fill="#eee"/><path d="M5 13.7 H8" stroke="#666"/><rect x="9" y="0" width="7" height="7" rx="1.5" fill="#7a7a7a"/><circle cx="12.5" cy="3.5" r="1.68" fill="#fff"/><rect x="11.95" y="0.55" width="1.1" height="1.1" fill="#fff"/><rect x="11.95" y="5.3500000000000005" width="1.1" height="1.1" fill="#fff"/><rect x="9.549999999999999" y="2.95" width="1.1" height="1.1" fill="#fff"/><rect x="14.35" y="2.95" width="1.1" height="1.1" fill="#fff"/><rect x="10.222" y="1.222" width="1.1" height="1.1" fill="#fff"/><rect x="13.677999999999999" y="4.678" width="1.1" height="1.1" fill="#fff"/><rect x="10.222" y="4.678" width="1.1" height="1.1" fill="#fff"/><rect x="13.677999999999999" y="1.222" width="1.1" height="1.1" fill="#fff"/><circle cx="12.5" cy="3.5" r="0.72" fill="#7a7a7a"/></svg>
<svg style="position:absolute;left:312px;top:30px" width="16" height="16" viewBox="0 0 16 16"><path d="M1.5 3.5 H10 V11.5 H6 L4 14.5 V11.5 H1.5 Z" fill="none" stroke="#8a8a8a" stroke-width="1.2"/><rect x="9" y="0" width="7" height="7" rx="1.5" fill="#7a7a7a"/><circle cx="12.5" cy="3.5" r="1.68" fill="#fff"/><rect x="11.95" y="0.55" width="1.1" height="1.1" fill="#fff"/><rect x="11.95" y="5.3500000000000005" width="1.1" height="1.1" fill="#fff"/><rect x="9.549999999999999" y="2.95" width="1.1" height="1.1" fill="#fff"/><rect x="14.35" y="2.95" width="1.1" height="1.1" fill="#fff"/><rect x="10.222" y="1.222" width="1.1" height="1.1" fill="#fff"/><rect x="13.677999999999999" y="4.678" width="1.1" height="1.1" fill="#fff"/><rect x="10.222" y="4.678" width="1.1" height="1.1" fill="#fff"/><rect x="13.677999999999999" y="1.222" width="1.1" height="1.1" fill="#fff"/><circle cx="12.5" cy="3.5" r="0.72" fill="#7a7a7a"/></svg>
<svg style="position:absolute;left:341px;top:30px" width="16" height="16" viewBox="0 0 16 16"><rect x="5" y="3" width="6" height="2.5" fill="#8a8a8a"/><rect x="3" y="5.5" width="10" height="2.5" fill="#8a8a8a"/><path d="M0 7 Q2 13 8 13 Q13 13 14 8 Z" fill="#9a9a9a"/><path d="M3 9 Q8 11 12 9" stroke="#ddd" fill="none"/><rect x="14.5" y="6" width="1.2" height="8" fill="#222"/></svg>
<svg style="position:absolute;left:364px;top:30px" width="16" height="16" viewBox="0 0 16 16"><rect x="4.5" y="1.5" width="9" height="10" fill="#aaa" stroke="#7a7a7a"/><rect x="0.5" y="6.5" width="6" height="8" fill="#999" stroke="#6a6a6a"/><path d="M2 7 V14 M3.5 7 V14 M5 7 V14" stroke="#ccc"/><rect x="9.5" y="10.5" width="6" height="5" fill="#bbb" stroke="#7a7a7a"/><rect x="10.5" y="11.5" width="3" height="1.5" fill="#eee"/></svg>
<svg style="position:absolute;left:528px;top:30px" width="16" height="16" viewBox="0 0 16 16"><path d="M3 3 L13 13 M13 3 L3 13" stroke="#8a8a8a" stroke-width="1.6"/></svg>
<svg style="position:absolute;left:557px;top:30px" width="16" height="16" viewBox="0 0 16 16"><rect x="3.5" y="0.5" width="9" height="13" rx="1" fill="#eaeaea" stroke="#7a7a7a"/><rect x="4" y="2" width="8" height="2.5" fill="#8a8a8a"/><path d="M5 6 h1 M7.5 6 h1 M10 6 h1 M5 8 h1 M7.5 8 h1 M10 8 h1" stroke="#fff"/><ellipse cx="3" cy="11" rx="2.5" ry="1.3" fill="#eee" stroke="#666"/><ellipse cx="3" cy="13.5" rx="2.5" ry="1.3" fill="#eee" stroke="#666"/><ellipse cx="13" cy="9.5" rx="2.5" ry="1.3" fill="#eee" stroke="#666"/><ellipse cx="13" cy="12" rx="2.5" ry="1.3" fill="#eee" stroke="#666"/><ellipse cx="13" cy="14.3" rx="2.5" ry="1.3" fill="#eee" stroke="#666"/></svg>
<svg style="position:absolute;left:580px;top:30px" width="16" height="16" viewBox="0 0 16 16"><path d="M3.5 3.5 L6 1 H13.5 V15.5 H3.5 Z" fill="#f4f4f4" stroke="#8a8a8a"/><rect x="8.5" y="0.5" width="7" height="8" fill="#f8f8f8" stroke="#999"/><path d="M2 10.5 H8 M5 7.5 V13.5" stroke="#6a6a6a" stroke-width="2"/><rect x="8" y="12" width="6" height="2" fill="#777"/></svg>
<svg style="position:absolute;left:600px;top:30px" width="16" height="16" viewBox="0 0 16 16"><path d="M11 1 L13 3 L15 4 L13 5 L11 7 L9 5 L7 4 L9 3 Z" fill="#6a6a6a"/><rect x="7.5" y="11" width="7" height="2.5" rx="1" fill="#8a8a8a"/></svg>
<svg style="position:absolute;left:632px;top:30px" width="16" height="16" viewBox="0 0 16 16"><path d="M2 0.5 C3 5 6 8 8 11 M11 0.5 C10 5 7 8 5 11" stroke="#9a9a9a" stroke-width="1.1" fill="none"/><circle cx="4" cy="12.8" r="2" fill="none" stroke="#777" stroke-width="1.3"/><circle cx="10" cy="12.8" r="2" fill="none" stroke="#777" stroke-width="1.3"/></svg>
<svg style="position:absolute;left:655px;top:30px" width="16" height="16" viewBox="0 0 16 16"><path d="M1 3 L3 1 H9 V11.5 H1 Z" fill="#f6f6f6" stroke="#8a8a8a"/><path d="M7 6 L9 4 H15.5 V15.5 H7 Z" fill="#f6f6f6" stroke="#8a8a8a"/><path d="M9 8.5 H14 M9 10.5 H14 M9 12.5 H14 M3 6 H6 M3 8 H6" stroke="#9a9a9a"/></svg>
<svg style="position:absolute;left:678px;top:30px" width="16" height="16" viewBox="0 0 16 16"><rect x="0.5" y="1.5" width="15" height="12" rx="1.5" fill="#a8a8a8" stroke="#8a8a8a"/><rect x="5" y="0.5" width="6" height="2" rx="1" fill="#ccc" stroke="#8a8a8a"/><path d="M3.5 5.5 L5.5 3.5 H12.5 V15.5 H3.5 Z" fill="#f4f4f4" stroke="#8a8a8a"/><path d="M5.5 8 H11 M5.5 10 H11 M5.5 12 H11" stroke="#7a7a7a"/></svg>
<svg style="position:absolute;left:825px;top:30px" width="16" height="16" viewBox="0 0 16 16"><path d="M0.5 2.5 L2 1 H9.5 V10.5 H0.5 Z" fill="#f8f8f8" stroke="#9a9a9a"/><path d="M6.5 5 L8 3.5 H15.5 V15.5 H6.5 Z" fill="#f8f8f8" stroke="#9a9a9a"/></svg>
<svg style="position:absolute;left:847px;top:30px" width="16" height="16" viewBox="0 0 16 16"><rect x="1" y="2.5" width="14.5" height="12" rx="1.5" fill="#fdb92a" stroke="#c89020"/><rect x="5" y="0.8" width="6.5" height="2.5" rx="1.2" fill="#f8e890" stroke="#c0a030"/><path d="M3.5 8 L5.5 6 H12.5 V15.5 H3.5 Z" fill="#d8f4f4" stroke="#6a8a90"/></svg>
<svg style="position:absolute;left:943px;top:30px" width="16" height="16" viewBox="0 0 16 16"><path d="M1 8 L6 2 L12 6 L15 10 L9 15 L2 12 Z" fill="#8a8a8a"/><path d="M1 11 L9 15 L15 11 L15 13 L9 16 L1 13 Z" fill="#cfcfcf"/><rect x="9" y="1" width="7" height="7" rx="1.5" fill="#8a8a8a"/><circle cx="12.5" cy="4.5" r="1.68" fill="#fff"/><rect x="11.95" y="1.55" width="1.1" height="1.1" fill="#fff"/><rect x="11.95" y="6.3500000000000005" width="1.1" height="1.1" fill="#fff"/><rect x="9.549999999999999" y="3.95" width="1.1" height="1.1" fill="#fff"/><rect x="14.35" y="3.95" width="1.1" height="1.1" fill="#fff"/><rect x="10.222" y="2.2220000000000004" width="1.1" height="1.1" fill="#fff"/><rect x="13.677999999999999" y="5.678" width="1.1" height="1.1" fill="#fff"/><rect x="10.222" y="5.678" width="1.1" height="1.1" fill="#fff"/><rect x="13.677999999999999" y="2.2220000000000004" width="1.1" height="1.1" fill="#fff"/><circle cx="12.5" cy="4.5" r="0.72" fill="#8a8a8a"/></svg>
<svg style="position:absolute;left:966px;top:30px" width="16" height="16" viewBox="0 0 16 16"><rect x="0.5" y="1.5" width="15" height="13.5" fill="#fff" stroke="#8a8a8a"/><rect x="0" y="0" width="7" height="7" rx="1" fill="#8a8a8a"/><circle cx="3.5" cy="3.5" r="1.68" fill="#fff"/><rect x="2.95" y="0.55" width="1.1" height="1.1" fill="#fff"/><rect x="2.95" y="5.3500000000000005" width="1.1" height="1.1" fill="#fff"/><rect x="0.55" y="2.95" width="1.1" height="1.1" fill="#fff"/><rect x="5.3500000000000005" y="2.95" width="1.1" height="1.1" fill="#fff"/><rect x="1.222" y="1.222" width="1.1" height="1.1" fill="#fff"/><rect x="4.678" y="4.678" width="1.1" height="1.1" fill="#fff"/><rect x="1.222" y="4.678" width="1.1" height="1.1" fill="#fff"/><rect x="4.678" y="1.222" width="1.1" height="1.1" fill="#fff"/><circle cx="3.5" cy="3.5" r="0.72" fill="#8a8a8a"/><path d="M7.5 14 V8.5 H10.5 Q12.5 8.5 12.5 10.5 Q12.5 12 10.5 12 H7.5" stroke="#111" stroke-width="1.3" fill="none"/></svg>
<svg style="position:absolute;left:989px;top:30px" width="16" height="16" viewBox="0 0 16 16"><rect x="0.5" y="1.5" width="15" height="13.5" fill="#fff" stroke="#8a8a8a"/><rect x="0" y="0" width="7" height="7" rx="1" fill="#8a8a8a"/><circle cx="3.5" cy="3.5" r="1.68" fill="#fff"/><rect x="2.95" y="0.55" width="1.1" height="1.1" fill="#fff"/><rect x="2.95" y="5.3500000000000005" width="1.1" height="1.1" fill="#fff"/><rect x="0.55" y="2.95" width="1.1" height="1.1" fill="#fff"/><rect x="5.3500000000000005" y="2.95" width="1.1" height="1.1" fill="#fff"/><rect x="1.222" y="1.222" width="1.1" height="1.1" fill="#fff"/><rect x="4.678" y="4.678" width="1.1" height="1.1" fill="#fff"/><rect x="1.222" y="4.678" width="1.1" height="1.1" fill="#fff"/><rect x="4.678" y="1.222" width="1.1" height="1.1" fill="#fff"/><circle cx="3.5" cy="3.5" r="0.72" fill="#8a8a8a"/><path d="M2.5 14 V8.5 H6.5 V14" stroke="#111" stroke-width="1" fill="none"/><path d="M8.5 14 V8.5 H11.5 Q13.5 8.5 13.5 10.2 Q13.5 12 11.5 12 H8.5" stroke="#111" stroke-width="1" fill="none"/></svg>
<svg style="position:absolute;left:1018px;top:30px" width="16" height="16" viewBox="0 0 16 16"><rect x="0.5" y="1.5" width="6" height="2" fill="#ddd" stroke="#8a8a8a"/><path d="M3.5 3.5 V14.5 H6 M3.5 7 H6 M3.5 10.5 H6" stroke="#8a8a8a" fill="none"/><rect x="5.5" y="5.5" width="6" height="2" fill="#eee" stroke="#8a8a8a"/><rect x="5.5" y="9.5" width="6" height="2" fill="#eee" stroke="#8a8a8a"/><rect x="5.5" y="13" width="6" height="2" fill="#eee" stroke="#8a8a8a"/><path d="M8 7 L14 1" stroke="#8a8a8a" stroke-width="1.6"/></svg>
<svg style="position:absolute;left:1041px;top:30px" width="16" height="16" viewBox="0 0 16 16"><rect x="0.5" y="1.5" width="6" height="2" fill="#ddd" stroke="#8a8a8a"/><path d="M3.5 3.5 V14.5 H6 M3.5 7 H6 M3.5 10.5 H6" stroke="#8a8a8a" fill="none"/><rect x="5.5" y="5.5" width="6" height="2" fill="#eee" stroke="#8a8a8a"/><rect x="5.5" y="9.5" width="6" height="2" fill="#eee" stroke="#8a8a8a"/><rect x="5.5" y="13" width="6" height="2" fill="#eee" stroke="#8a8a8a"/><path d="M11 1 L15 5 M15 1 L11 5" stroke="#8a8a8a" stroke-width="1"/></svg>
<svg style="position:absolute;left:1077px;top:30px" width="16" height="16" viewBox="0 0 16 16"><rect x="4.5" y="5.5" width="11.5" height="1.2" fill="#5a5a70"/><rect x="4.5" y="8.5" width="11.5" height="1.2" fill="#5a5a70"/><rect x="4.5" y="11.5" width="11.5" height="1.2" fill="#5a5a70"/><rect x="4.5" y="14.5" width="11.5" height="1.2" fill="#5a5a70"/><path d="M0 3.5 H4 V1 L7.5 4.5 L4 8 V5.5 H0 Z" fill="#0a3ad8"/></svg>
<svg style="position:absolute;left:1100px;top:30px" width="16" height="16" viewBox="0 0 16 16"><rect x="4.5" y="5.5" width="11.5" height="1.2" fill="#5a5a70"/><rect x="4.5" y="8.5" width="11.5" height="1.2" fill="#5a5a70"/><rect x="4.5" y="11.5" width="11.5" height="1.2" fill="#5a5a70"/><rect x="4.5" y="14.5" width="11.5" height="1.2" fill="#5a5a70"/><path d="M3 1 L6.5 4.5 H4.2 V8 H1.8 V4.5 H-0.5 Z" fill="#0a3ad8"/></svg>
<svg style="position:absolute;left:1123px;top:30px" width="16" height="16" viewBox="0 0 16 16"><rect x="4.5" y="5.5" width="11.5" height="1.2" fill="#5a5a70"/><rect x="4.5" y="8.5" width="11.5" height="1.2" fill="#5a5a70"/><rect x="4.5" y="11.5" width="11.5" height="1.2" fill="#5a5a70"/><rect x="4.5" y="14.5" width="11.5" height="1.2" fill="#5a5a70"/><path d="M3 15 L6.5 11.5 H4.2 V8 H1.8 V11.5 H-0.5 Z" fill="#0a3ad8"/></svg>
<svg style="position:absolute;left:1146px;top:30px" width="16" height="16" viewBox="0 0 16 16"><rect x="4.5" y="5.5" width="11.5" height="1.2" fill="#5a5a70"/><rect x="4.5" y="8.5" width="11.5" height="1.2" fill="#5a5a70"/><rect x="4.5" y="11.5" width="11.5" height="1.2" fill="#5a5a70"/><rect x="4.5" y="14.5" width="11.5" height="1.2" fill="#5a5a70"/><path d="M0 12 H4 V9.5 L7.5 13 L4 16.5 V14 H0 Z" fill="#0a3ad8"/></svg>
<svg style="position:absolute;left:1182px;top:30px" width="16" height="16" viewBox="0 0 16 16"><path d="M9.7 1.4 Q15.5 4 15 8 Q14 13.5 9 13.4 Q6.5 13.3 4.8 12.3" stroke="#90a8a8" stroke-width="1.3" fill="none"/><path d="M6.3 5.1 L14.5 13" stroke="#e09030" stroke-width="1.5"/><path d="M13.5 12 L15 14" stroke="#a05010" stroke-width="1.6"/><path d="M2.9 5.9 L7.8 2.9" stroke="#405050" stroke-width="2"/><path d="M1.4 13.4 L4.6 10.4" stroke="#e09030" stroke-width="1.6"/><path d="M1.4 13.4 L2.4 12.4" stroke="#603010" stroke-width="1.6"/></svg>
<svg style="position:absolute;left:1204px;top:31px" width="17" height="15" viewBox="0 0 17 15"><path d="M1 4 H10 L11.5 1 V9.5 H1 Z" fill="#2a7ae8"/><rect x="1" y="8" width="10.5" height="1.5" fill="#1050b0"/><path d="M11 2.5 H14 L16.5 6 V10 H11 Z" fill="#f8a020"/><path d="M12 3 H13.5 L15 5.5 H12 Z" fill="#d8f0ff"/><rect x="1" y="9.5" width="15.5" height="1" fill="#222"/><rect x="1.5" y="11.5" width="14.5" height="2" fill="#fff"/><rect x="1" y="13.2" width="15.5" height="0.9" fill="#444" opacity=".7"/><circle cx="4.2" cy="10.5" r="1.9" fill="#111"/><circle cx="4.2" cy="10.5" r=".8" fill="#f0f080"/><circle cx="13.8" cy="10.5" r="1.9" fill="#111"/><circle cx="13.8" cy="10.5" r=".8" fill="#f0f080"/></svg>
<svg style="position:absolute;left:1256px;top:31px" width="17" height="15" viewBox="0 0 17 15"><path d="M1 4 H10 L11.5 1 V9.5 H1 Z" fill="#2a7ae8"/><rect x="1" y="8" width="10.5" height="1.5" fill="#1050b0"/><path d="M11 2.5 H14 L16.5 6 V10 H11 Z" fill="#f8a020"/><path d="M12 3 H13.5 L15 5.5 H12 Z" fill="#d8f0ff"/><rect x="1" y="9.5" width="15.5" height="1" fill="#222"/><rect x="1.5" y="11.5" width="14.5" height="2" fill="#fff"/><rect x="1" y="13.2" width="15.5" height="0.9" fill="#444" opacity=".7"/><circle cx="4.2" cy="10.5" r="1.9" fill="#111"/><circle cx="4.2" cy="10.5" r=".8" fill="#f0f080"/><circle cx="13.8" cy="10.5" r="1.9" fill="#111"/><circle cx="13.8" cy="10.5" r=".8" fill="#f0f080"/><ellipse cx="6.5" cy="2.8" rx="4.5" ry="2" fill="#e06000"/><ellipse cx="5" cy="2.2" rx="1.2" ry=".8" fill="#ffb060"/><ellipse cx="8" cy="2.5" rx="1.2" ry=".8" fill="#ffa040"/></svg>
<svg style="position:absolute;left:1228px;top:30px" width="16" height="16" viewBox="0 0 16 16"><rect x="5.2" y="5" width="5.5" height="2.6" rx="1.3" fill="#f07010" stroke="#c85000" stroke-width=".6"/><rect x="6.7" y="5.7" width="2" height=".7" fill="#ffb070"/><rect x="2.6" y="7.5" width="5.5" height="2.6" rx="1.3" fill="#f07010" stroke="#c85000" stroke-width=".6"/><rect x="4.1" y="8.2" width="2" height=".7" fill="#ffb070"/><rect x="7.8" y="7.5" width="5.5" height="2.6" rx="1.3" fill="#f07010" stroke="#c85000" stroke-width=".6"/><rect x="9.3" y="8.2" width="2" height=".7" fill="#ffb070"/><rect x="0.2" y="10" width="5.5" height="2.6" rx="1.3" fill="#f07010" stroke="#c85000" stroke-width=".6"/><rect x="1.7" y="10.7" width="2" height=".7" fill="#ffb070"/><rect x="5.2" y="10" width="5.5" height="2.6" rx="1.3" fill="#f07010" stroke="#c85000" stroke-width=".6"/><rect x="6.7" y="10.7" width="2" height=".7" fill="#ffb070"/><rect x="10.3" y="10" width="5.5" height="2.6" rx="1.3" fill="#f07010" stroke="#c85000" stroke-width=".6"/><rect x="11.8" y="10.7" width="2" height=".7" fill="#ffb070"/></svg>
<svg style="position:absolute;left:1293px;top:31px" width="16" height="16" viewBox="0 0 16 16"><path d="M0.5 9.5 L8 12 V15.5 L0.5 13 Z" fill="#fff"/><path d="M8 12 L16 8 V12 L8 15.5 Z" fill="#dde4f0"/><path d="M0.5 13 L8 15.8 L16 12" stroke="#f05050" stroke-width="1" stroke-dasharray="1.5 1" fill="none"/><path d="M0.7 13 V9.5 L8 12 L16 8" stroke="#e02828" stroke-width="1.5" fill="none"/><path d="M2 5.5 L8.5 7.5 V10.5 L2 8.5 Z" fill="#fff"/><path d="M8.5 7.5 L15.5 4 V7 L8.5 10.5 Z" fill="#dde4f0"/><path d="M2 5.5 L9 2 L15.5 4 L8.5 7.5 Z" fill="#e060b0"/><path d="M2 5.5 V8.5" stroke="#e060b0" stroke-width="1"/></svg>
<svg style="position:absolute;left:1316px;top:31px" width="16" height="16" viewBox="0 0 16 16"><path d="M0.5 9.5 L8 12 V15.5 L0.5 13 Z" fill="#fff"/><path d="M8 12 L16 8 V12 L8 15.5 Z" fill="#dde4f0"/><path d="M0.5 13 L8 15.8 L16 12" stroke="#40b0f0" stroke-width="1" stroke-dasharray="1.5 1" fill="none"/><path d="M0.7 13 V9.5 L8 12 L16 8" stroke="#1890e0" stroke-width="1.5" fill="none"/><path d="M2 5.5 L8.5 7.5 V10.5 L2 8.5 Z" fill="#fff"/><path d="M8.5 7.5 L15.5 4 V7 L8.5 10.5 Z" fill="#dde4f0"/><path d="M2 5.5 L9 2 L15.5 4 L8.5 7.5 Z" fill="#2040d0"/><path d="M2 5.5 V8.5" stroke="#2040d0" stroke-width="1"/></svg>
<svg style="position:absolute;left:116px;top:108px" width="16" height="16" viewBox="0 0 16 16"><path d="M0.5 2.5 H6 L7 4 H15.5 V14.5 H0.5 Z" fill="#fcd060" stroke="#8a8a8a"/><rect x="1" y="5" width="14" height="9" fill="#fcc840"/><path d="M5 12 V7.5 M3 9.5 L5 7 L7 9.5 M5 12 H10" stroke="#333" stroke-width="1.2" fill="none"/></svg>
<svg style="position:absolute;left:139px;top:108px" width="16" height="16" viewBox="0 0 16 16"><path d="M0.5 2.5 H6 L7 4 H15.5 V14.5 H0.5 Z" fill="#a8f090" stroke="#907080"/><rect x="1" y="6" width="14" height="8" fill="#78e848"/><rect x="6" y="8.5" width="4" height="1.2" fill="#333"/></svg>
<svg style="position:absolute;left:176px;top:108px" width="16" height="16" viewBox="0 0 16 16"><path d="M6 13 A5.5 5.5 0 0 1 4 2.5" stroke="#18a018" stroke-width="2.2" fill="none"/><path d="M2 0.5 H7 V5.5 Z" fill="#18a018"/><path d="M8 1.5 A5.5 5.5 0 0 1 10 12" stroke="#18a018" stroke-width="2.2" fill="none"/><path d="M7 13.5 H12 V8.5 Z" fill="#108010"/></svg>
<svg style="position:absolute;left:206px;top:108px" width="16" height="16" viewBox="0 0 16 16"><rect x="0.5" y="6.5" width="4" height="8.5" fill="#ccc" stroke="#aaa"/><rect x="5.5" y="2.5" width="4.5" height="12.5" fill="#ccc" stroke="#aaa"/><rect x="11" y="7.5" width="4" height="7.5" fill="#ccc" stroke="#aaa"/><rect x="8" y="1" width="7" height="7" rx="1.5" fill="#8a8a8a"/><circle cx="11.5" cy="4.5" r="1.68" fill="#fff"/><rect x="10.95" y="1.55" width="1.1" height="1.1" fill="#fff"/><rect x="10.95" y="6.3500000000000005" width="1.1" height="1.1" fill="#fff"/><rect x="8.549999999999999" y="3.95" width="1.1" height="1.1" fill="#fff"/><rect x="13.35" y="3.95" width="1.1" height="1.1" fill="#fff"/><rect x="9.222" y="2.2220000000000004" width="1.1" height="1.1" fill="#fff"/><rect x="12.677999999999999" y="5.678" width="1.1" height="1.1" fill="#fff"/><rect x="9.222" y="5.678" width="1.1" height="1.1" fill="#fff"/><rect x="12.677999999999999" y="2.2220000000000004" width="1.1" height="1.1" fill="#fff"/><circle cx="11.5" cy="4.5" r="0.72" fill="#8a8a8a"/></svg>
<svg style="position:absolute;left:228px;top:108px" width="16" height="16" viewBox="0 0 16 16"><rect x="0.5" y="1.5" width="6" height="13" fill="#ddd" stroke="#aaa"/><path d="M1 4 H6 M1 6 H6 M1 8 H6 M1 10 H6 M1 12 H6" stroke="#fff"/><rect x="9.5" y="7.5" width="6" height="7" fill="#ccc" stroke="#888"/><path d="M10 10 H15 M10 12 H15" stroke="#fff"/><rect x="8.5" y="0.5" width="7" height="7" rx="1.5" fill="#8a8a8a"/><circle cx="12" cy="4" r="1.68" fill="#fff"/><rect x="11.45" y="1.05" width="1.1" height="1.1" fill="#fff"/><rect x="11.45" y="5.8500000000000005" width="1.1" height="1.1" fill="#fff"/><rect x="9.049999999999999" y="3.45" width="1.1" height="1.1" fill="#fff"/><rect x="13.85" y="3.45" width="1.1" height="1.1" fill="#fff"/><rect x="9.722" y="1.7220000000000002" width="1.1" height="1.1" fill="#fff"/><rect x="13.177999999999999" y="5.178" width="1.1" height="1.1" fill="#fff"/><rect x="9.722" y="5.178" width="1.1" height="1.1" fill="#fff"/><rect x="13.177999999999999" y="1.7220000000000002" width="1.1" height="1.1" fill="#fff"/><circle cx="12" cy="4" r="0.72" fill="#8a8a8a"/></svg>
<svg style="position:absolute;left:255px;top:108px" width="16" height="16" viewBox="0 0 16 16"><rect x="0.5" y="3.5" width="8" height="12" fill="#eee" stroke="#aaa"/><path d="M1 6 H8 M1 8 H8 M1 10 H8 M1 12 H8" stroke="#ccc"/><rect x="4.5" y="0.5" width="7" height="7" rx="1.5" fill="#8a8a8a"/><circle cx="8" cy="4" r="1.68" fill="#fff"/><rect x="7.45" y="1.05" width="1.1" height="1.1" fill="#fff"/><rect x="7.45" y="5.8500000000000005" width="1.1" height="1.1" fill="#fff"/><rect x="5.05" y="3.45" width="1.1" height="1.1" fill="#fff"/><rect x="9.85" y="3.45" width="1.1" height="1.1" fill="#fff"/><rect x="5.722" y="1.7220000000000002" width="1.1" height="1.1" fill="#fff"/><rect x="9.177999999999999" y="5.178" width="1.1" height="1.1" fill="#fff"/><rect x="5.722" y="5.178" width="1.1" height="1.1" fill="#fff"/><rect x="9.177999999999999" y="1.7220000000000002" width="1.1" height="1.1" fill="#fff"/><circle cx="8" cy="4" r="0.72" fill="#8a8a8a"/></svg>
<svg style="position:absolute;left:274px;top:108px" width="16" height="16" viewBox="0 0 16 16"><rect x="0.5" y="1.5" width="3" height="14" fill="#f4f4f4" stroke="#8a8a8a"/><path d="M0.5 4 H3.5 M0.5 7 H3.5 M0.5 10 H3.5 M0.5 13 H3.5" stroke="#8a8a8a"/><rect x="3" y="1.5" width="8" height="1" fill="#8a8a8a"/><circle cx="1.5" cy="1" r="1" fill="#8a50e0"/><path d="M3.5 10 L9 3 L14 10 Z" fill="#b080f0"/><path d="M4 8.5 L10 2" stroke="#4a1a60"/><rect x="3.5" y="8" width="11" height="2.5" fill="#f07010"/><rect x="3.5" y="10" width="11" height="1" fill="#603020"/><rect x="6" y="11" width="4" height="5" fill="#3a8af0"/><rect x="11" y="11" width="4" height="5" fill="#3a8af0"/><path d="M6 13 H10 M11 13 H15 M8 11 V16 M13 11 V16" stroke="#fff" stroke-width=".6"/><rect x="9" y="0" width="7" height="7" rx="1.5" fill="#f08a20"/><circle cx="12.5" cy="3.5" r="1.68" fill="#fff"/><rect x="11.95" y="0.55" width="1.1" height="1.1" fill="#fff"/><rect x="11.95" y="5.3500000000000005" width="1.1" height="1.1" fill="#fff"/><rect x="9.549999999999999" y="2.95" width="1.1" height="1.1" fill="#fff"/><rect x="14.35" y="2.95" width="1.1" height="1.1" fill="#fff"/><rect x="10.222" y="1.222" width="1.1" height="1.1" fill="#fff"/><rect x="13.677999999999999" y="4.678" width="1.1" height="1.1" fill="#fff"/><rect x="10.222" y="4.678" width="1.1" height="1.1" fill="#fff"/><rect x="13.677999999999999" y="1.222" width="1.1" height="1.1" fill="#fff"/><circle cx="12.5" cy="3.5" r="0.72" fill="#f08a20"/></svg>
<svg style="position:absolute;left:297px;top:108px" width="16" height="16" viewBox="0 0 16 16"><rect x="0.5" y="1.5" width="3" height="14" fill="#f4f4f4" stroke="#8a8a8a"/><path d="M0.5 4 H3.5 M0.5 7 H3.5 M0.5 10 H3.5 M0.5 13 H3.5" stroke="#8a8a8a"/><rect x="3" y="1.5" width="8" height="1" fill="#8a8a8a"/><circle cx="1.5" cy="1" r="1" fill="#8a50e0"/><path d="M4 4 L10 1" stroke="#4a1a60"/><rect x="3.5" y="5" width="11" height="2" fill="#f07010"/><rect x="3.5" y="7" width="11" height=".8" fill="#603020"/><rect x="4.5" y="8.5" width="8" height="4" rx="1" fill="#1a80f0"/><path d="M12.5 10 Q15 11 13 14 H9" stroke="#111" fill="none"/><rect x="6" y="14" width="2" height="2" fill="#e00"/><rect x="13" y="8" width="2.5" height="8" fill="#3a8af0"/><rect x="9" y="0" width="7" height="7" rx="1.5" fill="#f08a20"/><circle cx="12.5" cy="3.5" r="1.68" fill="#fff"/><rect x="11.95" y="0.55" width="1.1" height="1.1" fill="#fff"/><rect x="11.95" y="5.3500000000000005" width="1.1" height="1.1" fill="#fff"/><rect x="9.549999999999999" y="2.95" width="1.1" height="1.1" fill="#fff"/><rect x="14.35" y="2.95" width="1.1" height="1.1" fill="#fff"/><rect x="10.222" y="1.222" width="1.1" height="1.1" fill="#fff"/><rect x="13.677999999999999" y="4.678" width="1.1" height="1.1" fill="#fff"/><rect x="10.222" y="4.678" width="1.1" height="1.1" fill="#fff"/><rect x="13.677999999999999" y="1.222" width="1.1" height="1.1" fill="#fff"/><circle cx="12.5" cy="3.5" r="0.72" fill="#f08a20"/></svg>
<svg style="position:absolute;left:320px;top:108px" width="16" height="16" viewBox="0 0 16 16"><path d="M0 9 L7 2 L16 7 L9 14 Z" fill="#3aa060"/><path d="M0 9 L9 14 L9 16 L0 11 Z" fill="#d8dde8"/><path d="M9 14 L16 7 V9 L9 16 Z" fill="#b8c0cc"/><path d="M5 5 L9 7" stroke="#d0f0d8" stroke-width="1.2"/><rect x="9" y="1" width="7" height="7" rx="1.5" fill="#f08a20"/><circle cx="12.5" cy="4.5" r="1.68" fill="#fff"/><rect x="11.95" y="1.55" width="1.1" height="1.1" fill="#fff"/><rect x="11.95" y="6.3500000000000005" width="1.1" height="1.1" fill="#fff"/><rect x="9.549999999999999" y="3.95" width="1.1" height="1.1" fill="#fff"/><rect x="14.35" y="3.95" width="1.1" height="1.1" fill="#fff"/><rect x="10.222" y="2.2220000000000004" width="1.1" height="1.1" fill="#fff"/><rect x="13.677999999999999" y="5.678" width="1.1" height="1.1" fill="#fff"/><rect x="10.222" y="5.678" width="1.1" height="1.1" fill="#fff"/><rect x="13.677999999999999" y="2.2220000000000004" width="1.1" height="1.1" fill="#fff"/><circle cx="12.5" cy="4.5" r="0.72" fill="#f08a20"/></svg>
<svg style="position:absolute;left:343px;top:108px" width="16" height="16" viewBox="0 0 16 16"><path d="M0 9 L7 2 L16 7 L9 14 Z" fill="#3aa060"/><path d="M0 9 L9 14 L9 16 L0 11 Z" fill="#d8dde8"/><path d="M9 14 L16 7 V9 L9 16 Z" fill="#b8c0cc"/><path d="M5 5 L9 7" stroke="#d0f0d8" stroke-width="1.2"/><rect x="4" y="8" width="8" height="4" rx="1" fill="#1a80f0"/><path d="M12 9.5 Q14.5 10.5 12.5 13.5 H9" stroke="#111" fill="none"/><rect x="6" y="13.5" width="2" height="2" fill="#e00"/><rect x="9" y="1" width="7" height="7" rx="1.5" fill="#f08a20"/><circle cx="12.5" cy="4.5" r="1.68" fill="#fff"/><rect x="11.95" y="1.55" width="1.1" height="1.1" fill="#fff"/><rect x="11.95" y="6.3500000000000005" width="1.1" height="1.1" fill="#fff"/><rect x="9.549999999999999" y="3.95" width="1.1" height="1.1" fill="#fff"/><rect x="14.35" y="3.95" width="1.1" height="1.1" fill="#fff"/><rect x="10.222" y="2.2220000000000004" width="1.1" height="1.1" fill="#fff"/><rect x="13.677999999999999" y="5.678" width="1.1" height="1.1" fill="#fff"/><rect x="10.222" y="5.678" width="1.1" height="1.1" fill="#fff"/><rect x="13.677999999999999" y="2.2220000000000004" width="1.1" height="1.1" fill="#fff"/><circle cx="12.5" cy="4.5" r="0.72" fill="#f08a20"/></svg>
<svg style="position:absolute;left:373px;top:108px" width="16" height="16" viewBox="0 0 16 16"><path d="M1 8 L7 2 L13 8" stroke="#d06a20" stroke-width="1.3" fill="none"/><rect x="3" y="1" width="2" height="4" fill="#f0a030"/><path d="M2 8 V14.5 H12 V8 L7 3 Z" fill="#fff" stroke="#9a9a9a" stroke-width=".8"/><rect x="1" y="14" width="13" height="1.5" fill="#555"/><rect x="4" y="9" width="2.5" height="5" fill="#f0a020"/><rect x="8.5" y="8.5" width="2.5" height="3" fill="#70a0e0"/><rect x="8.5" y="0" width="7.5" height="7" rx="1.5" fill="#f08a20"/><circle cx="12.2" cy="3.5" r="1.68" fill="#fff"/><rect x="11.649999999999999" y="0.55" width="1.1" height="1.1" fill="#fff"/><rect x="11.649999999999999" y="5.3500000000000005" width="1.1" height="1.1" fill="#fff"/><rect x="9.249999999999998" y="2.95" width="1.1" height="1.1" fill="#fff"/><rect x="14.049999999999999" y="2.95" width="1.1" height="1.1" fill="#fff"/><rect x="9.921999999999999" y="1.222" width="1.1" height="1.1" fill="#fff"/><rect x="13.377999999999998" y="4.678" width="1.1" height="1.1" fill="#fff"/><rect x="9.921999999999999" y="4.678" width="1.1" height="1.1" fill="#fff"/><rect x="13.377999999999998" y="1.222" width="1.1" height="1.1" fill="#fff"/><circle cx="12.2" cy="3.5" r="0.72" fill="#f08a20"/></svg>
<svg style="position:absolute;left:396px;top:108px" width="16" height="16" viewBox="0 0 16 16"><path d="M1 8 L7 2 L13 8" stroke="#d06a20" stroke-width="1.3" fill="none"/><rect x="3" y="1" width="2" height="4" fill="#f0a030"/><path d="M2 8 V14.5 H12 V8 L7 3 Z" fill="#fff" stroke="#9a9a9a" stroke-width=".8"/><rect x="1" y="14" width="13" height="1.5" fill="#555"/><rect x="3" y="8" width="8" height="3.5" rx="1" fill="#1a80f0"/><path d="M11 9.5 Q13 10.5 11 13 H8" stroke="#111" fill="none"/><circle cx="7" cy="13.5" r="1.1" fill="#e00"/><rect x="8.5" y="0" width="7.5" height="7" rx="1.5" fill="#f08a20"/><circle cx="12.2" cy="3.5" r="1.68" fill="#fff"/><rect x="11.649999999999999" y="0.55" width="1.1" height="1.1" fill="#fff"/><rect x="11.649999999999999" y="5.3500000000000005" width="1.1" height="1.1" fill="#fff"/><rect x="9.249999999999998" y="2.95" width="1.1" height="1.1" fill="#fff"/><rect x="14.049999999999999" y="2.95" width="1.1" height="1.1" fill="#fff"/><rect x="9.921999999999999" y="1.222" width="1.1" height="1.1" fill="#fff"/><rect x="13.377999999999998" y="4.678" width="1.1" height="1.1" fill="#fff"/><rect x="9.921999999999999" y="4.678" width="1.1" height="1.1" fill="#fff"/><rect x="13.377999999999998" y="1.222" width="1.1" height="1.1" fill="#fff"/><circle cx="12.2" cy="3.5" r="0.72" fill="#f08a20"/></svg>
<svg style="position:absolute;left:424px;top:108px" width="16" height="16" viewBox="0 0 16 16"><rect x="0.5" y="1.5" width="15" height="13.5" fill="#fff" stroke="#8a8a8a"/><rect x="0" y="0" width="7" height="7" rx="1" fill="#8a8a8a"/><circle cx="3.5" cy="3.5" r="1.68" fill="#fff"/><rect x="2.95" y="0.55" width="1.1" height="1.1" fill="#fff"/><rect x="2.95" y="5.3500000000000005" width="1.1" height="1.1" fill="#fff"/><rect x="0.55" y="2.95" width="1.1" height="1.1" fill="#fff"/><rect x="5.3500000000000005" y="2.95" width="1.1" height="1.1" fill="#fff"/><rect x="1.222" y="1.222" width="1.1" height="1.1" fill="#fff"/><rect x="4.678" y="4.678" width="1.1" height="1.1" fill="#fff"/><rect x="1.222" y="4.678" width="1.1" height="1.1" fill="#fff"/><rect x="4.678" y="1.222" width="1.1" height="1.1" fill="#fff"/><circle cx="3.5" cy="3.5" r="0.72" fill="#8a8a8a"/><path d="M7.5 14 V8.5 H10.5 Q12.5 8.5 12.5 10.5 Q12.5 12 10.5 12 H7.5" stroke="#111" stroke-width="1.3" fill="none"/></svg>
<svg style="position:absolute;left:447px;top:108px" width="16" height="16" viewBox="0 0 16 16"><rect x="0.5" y="1.5" width="15" height="13.5" fill="#fff" stroke="#8a8a8a"/><rect x="0" y="0" width="7" height="7" rx="1" fill="#8a8a8a"/><circle cx="3.5" cy="3.5" r="1.68" fill="#fff"/><rect x="2.95" y="0.55" width="1.1" height="1.1" fill="#fff"/><rect x="2.95" y="5.3500000000000005" width="1.1" height="1.1" fill="#fff"/><rect x="0.55" y="2.95" width="1.1" height="1.1" fill="#fff"/><rect x="5.3500000000000005" y="2.95" width="1.1" height="1.1" fill="#fff"/><rect x="1.222" y="1.222" width="1.1" height="1.1" fill="#fff"/><rect x="4.678" y="4.678" width="1.1" height="1.1" fill="#fff"/><rect x="1.222" y="4.678" width="1.1" height="1.1" fill="#fff"/><rect x="4.678" y="1.222" width="1.1" height="1.1" fill="#fff"/><circle cx="3.5" cy="3.5" r="0.72" fill="#8a8a8a"/><path d="M2.5 14 V8.5 H6.5 V14" stroke="#111" stroke-width="1" fill="none"/><path d="M8.5 14 V8.5 H11.5 Q13.5 8.5 13.5 10.2 Q13.5 12 11.5 12 H8.5" stroke="#111" stroke-width="1" fill="none"/></svg>
<svg style="position:absolute;left:472px;top:108px" width="11" height="16" viewBox="0 0 11 16"><path d="M5.5 1 L10.5 6.5 H7.3 V14 H3.7 V6.5 H0.5 Z" fill="#a0a0a0"/></svg>
<svg style="position:absolute;left:495px;top:108px" width="11" height="16" viewBox="0 0 11 16"><path d="M5.5 15 L10.5 9.5 H7.3 V2 H3.7 V9.5 H0.5 Z" fill="#a0a0a0"/></svg>
<svg style="position:absolute;left:522px;top:108px" width="16" height="16" viewBox="0 0 16 16"><path d="M2 7 L7.5 1.5 L13 7" stroke="#a04020" stroke-width="1.2" fill="none"/><path d="M3 7 V11 H12 V7 L7.5 2.5 Z" fill="#fff"/><rect x="8" y="5" width="2" height="2" fill="#80b0f0"/><path d="M0 12 L3 9 L6 12 M9 12 L12 9 L15 12" stroke="#a04020" stroke-width="1" fill="none"/><rect x="1" y="12" width="4" height="3.5" fill="#fff" stroke="#aaa" stroke-width=".5"/><rect x="10" y="12" width="4" height="3.5" fill="#fff" stroke="#aaa" stroke-width=".5"/><rect x="2" y="13" width="1.3" height="2.5" fill="#f0a020"/><rect x="11" y="13" width="1.3" height="2.5" fill="#f0a020"/></svg>
<svg style="position:absolute;left:545px;top:108px" width="16" height="16" viewBox="0 0 16 16"><rect x="2.5" y="4.5" width="13" height="10" fill="#40a890" stroke="#308070"/><rect x="0.5" y="3" width="12" height="11.5" fill="#50b8a0" stroke="#308070"/><text x="1.5" y="9.5" font-family="Liberation Sans" font-size="6" fill="#fff">0</text><path d="M4 13 L8 5" stroke="#fff"/><text x="6.5" y="13.5" font-family="Liberation Sans" font-size="6" fill="#fff">0</text><rect x="9" y="0" width="7" height="7" rx="1.5" fill="#f08a20"/><circle cx="12.5" cy="3.5" r="1.68" fill="#fff"/><rect x="11.95" y="0.55" width="1.1" height="1.1" fill="#fff"/><rect x="11.95" y="5.3500000000000005" width="1.1" height="1.1" fill="#fff"/><rect x="9.549999999999999" y="2.95" width="1.1" height="1.1" fill="#fff"/><rect x="14.35" y="2.95" width="1.1" height="1.1" fill="#fff"/><rect x="10.222" y="1.222" width="1.1" height="1.1" fill="#fff"/><rect x="13.677999999999999" y="4.678" width="1.1" height="1.1" fill="#fff"/><rect x="10.222" y="4.678" width="1.1" height="1.1" fill="#fff"/><rect x="13.677999999999999" y="1.222" width="1.1" height="1.1" fill="#fff"/><circle cx="12.5" cy="3.5" r="0.72" fill="#f08a20"/></svg>
<svg style="position:absolute;left:574px;top:108px" width="16" height="16" viewBox="0 0 16 16"><rect x="0.5" y="2.5" width="15" height="13" fill="#eef6ee" stroke="#9a9a9a"/><text x="1.2" y="13.5" font-family="Liberation Mono" font-size="9" fill="#111" letter-spacing="-1">%0</text><rect x="9" y="0" width="7" height="7" rx="1.5" fill="#f08a20"/><circle cx="12.5" cy="3.5" r="1.68" fill="#fff"/><rect x="11.95" y="0.55" width="1.1" height="1.1" fill="#fff"/><rect x="11.95" y="5.3500000000000005" width="1.1" height="1.1" fill="#fff"/><rect x="9.549999999999999" y="2.95" width="1.1" height="1.1" fill="#fff"/><rect x="14.35" y="2.95" width="1.1" height="1.1" fill="#fff"/><rect x="10.222" y="1.222" width="1.1" height="1.1" fill="#fff"/><rect x="13.677999999999999" y="4.678" width="1.1" height="1.1" fill="#fff"/><rect x="10.222" y="4.678" width="1.1" height="1.1" fill="#fff"/><rect x="13.677999999999999" y="1.222" width="1.1" height="1.1" fill="#fff"/><circle cx="12.5" cy="3.5" r="0.72" fill="#f08a20"/></svg>
<svg style="position:absolute;left:597px;top:108px" width="16" height="16" viewBox="0 0 16 16"><rect x="0.5" y="2.5" width="15" height="13" fill="#e4f4e0" stroke="#9a9a9a"/><text x="1.2" y="13.5" font-family="Liberation Mono" font-size="9" fill="#111" letter-spacing="-1">M29</text><rect x="9" y="0" width="7" height="7" rx="1.5" fill="#f08a20"/><circle cx="12.5" cy="3.5" r="1.68" fill="#fff"/><rect x="11.95" y="0.55" width="1.1" height="1.1" fill="#fff"/><rect x="11.95" y="5.3500000000000005" width="1.1" height="1.1" fill="#fff"/><rect x="9.549999999999999" y="2.95" width="1.1" height="1.1" fill="#fff"/><rect x="14.35" y="2.95" width="1.1" height="1.1" fill="#fff"/><rect x="10.222" y="1.222" width="1.1" height="1.1" fill="#fff"/><rect x="13.677999999999999" y="4.678" width="1.1" height="1.1" fill="#fff"/><rect x="10.222" y="4.678" width="1.1" height="1.1" fill="#fff"/><rect x="13.677999999999999" y="1.222" width="1.1" height="1.1" fill="#fff"/><circle cx="12.5" cy="3.5" r="0.72" fill="#f08a20"/></svg>
<svg style="position:absolute;left:620px;top:108px" width="16" height="16" viewBox="0 0 16 16"><rect x="0.5" y="2.5" width="15" height="13" fill="#e4eef8" stroke="#9a9a9a"/><text x="1.2" y="13.5" font-family="Liberation Mono" font-size="9" fill="#111" letter-spacing="-1">PP</text><rect x="9" y="0" width="7" height="7" rx="1.5" fill="#f08a20"/><circle cx="12.5" cy="3.5" r="1.68" fill="#fff"/><rect x="11.95" y="0.55" width="1.1" height="1.1" fill="#fff"/><rect x="11.95" y="5.3500000000000005" width="1.1" height="1.1" fill="#fff"/><rect x="9.549999999999999" y="2.95" width="1.1" height="1.1" fill="#fff"/><rect x="14.35" y="2.95" width="1.1" height="1.1" fill="#fff"/><rect x="10.222" y="1.222" width="1.1" height="1.1" fill="#fff"/><rect x="13.677999999999999" y="4.678" width="1.1" height="1.1" fill="#fff"/><rect x="10.222" y="4.678" width="1.1" height="1.1" fill="#fff"/><rect x="13.677999999999999" y="1.222" width="1.1" height="1.1" fill="#fff"/><circle cx="12.5" cy="3.5" r="0.72" fill="#f08a20"/></svg>
<svg style="position:absolute;left:643px;top:108px" width="16" height="16" viewBox="0 0 16 16"><rect x="0.5" y="2.5" width="15" height="13" fill="#e8f4e4" stroke="#9a9a9a"/><text x="1.2" y="13.5" font-family="Liberation Mono" font-size="9" fill="#111" letter-spacing="-1">Ф3</text><rect x="9" y="0" width="7" height="7" rx="1.5" fill="#f08a20"/><circle cx="12.5" cy="3.5" r="1.68" fill="#fff"/><rect x="11.95" y="0.55" width="1.1" height="1.1" fill="#fff"/><rect x="11.95" y="5.3500000000000005" width="1.1" height="1.1" fill="#fff"/><rect x="9.549999999999999" y="2.95" width="1.1" height="1.1" fill="#fff"/><rect x="14.35" y="2.95" width="1.1" height="1.1" fill="#fff"/><rect x="10.222" y="1.222" width="1.1" height="1.1" fill="#fff"/><rect x="13.677999999999999" y="4.678" width="1.1" height="1.1" fill="#fff"/><rect x="10.222" y="4.678" width="1.1" height="1.1" fill="#fff"/><rect x="13.677999999999999" y="1.222" width="1.1" height="1.1" fill="#fff"/><circle cx="12.5" cy="3.5" r="0.72" fill="#f08a20"/></svg>
<svg style="position:absolute;left:672px;top:108px" width="16" height="16" viewBox="0 0 16 16"><path d="M0.5 3.5 H6 L7 5 H15.5 V15.5 H0.5 Z" fill="#aaa" stroke="#8a8a8a"/><rect x="1" y="6.5" width="14" height="9" fill="#bcbcbc"/><rect x="9" y="0" width="7" height="7" rx="1.5" fill="#8a8a8a"/><circle cx="12.5" cy="3.5" r="1.68" fill="#fff"/><rect x="11.95" y="0.55" width="1.1" height="1.1" fill="#fff"/><rect x="11.95" y="5.3500000000000005" width="1.1" height="1.1" fill="#fff"/><rect x="9.549999999999999" y="2.95" width="1.1" height="1.1" fill="#fff"/><rect x="14.35" y="2.95" width="1.1" height="1.1" fill="#fff"/><rect x="10.222" y="1.222" width="1.1" height="1.1" fill="#fff"/><rect x="13.677999999999999" y="4.678" width="1.1" height="1.1" fill="#fff"/><rect x="10.222" y="4.678" width="1.1" height="1.1" fill="#fff"/><rect x="13.677999999999999" y="1.222" width="1.1" height="1.1" fill="#fff"/><circle cx="12.5" cy="3.5" r="0.72" fill="#8a8a8a"/></svg>
<svg style="position:absolute;left:703px;top:109px" width="12" height="12" viewBox="0 0 12 12"><path d="M1 1 L11 11 M11 1 L1 11" stroke="#f04020" stroke-width="1.8"/></svg>
<svg style="position:absolute;left:26px;top:156px" width="16" height="15" viewBox="0 0 16 15"><path d="M6 0 L0 13 H12 Z" fill="#3a6ad8"/><rect x="8" y="6" width="8" height="6" fill="#60c040"/><circle cx="7" cy="10" r="3.6" fill="#e82010"/><circle cx="6" cy="8.8" r="1.2" fill="#ff9080"/></svg>
<svg style="position:absolute;left:46px;top:172px" width="16" height="15" viewBox="0 0 16 15"><rect x="0" y="5" width="5" height="10" fill="#2a70d8"/><rect x="5" y="2.5" width="5" height="12.5" fill="#1a64d0"/><rect x="10" y="6.5" width="5" height="8.5" fill="#2a70d8"/><rect x="1" y="6" width="3" height="1" fill="#b8d4f8"/><rect x="1" y="8" width="3" height="1" fill="#b8d4f8"/><rect x="1" y="10" width="3" height="1" fill="#b8d4f8"/><rect x="1" y="12" width="3" height="1" fill="#b8d4f8"/><rect x="6" y="4" width="3" height="1" fill="#c8dcfa"/><rect x="6" y="6" width="3" height="1" fill="#c8dcfa"/><rect x="6" y="8" width="3" height="1" fill="#c8dcfa"/><rect x="6" y="10" width="3" height="1" fill="#c8dcfa"/><rect x="6" y="12" width="3" height="1" fill="#c8dcfa"/><rect x="11" y="8" width="3" height="1" fill="#b8d4f8"/><rect x="11" y="10" width="3" height="1" fill="#b8d4f8"/><rect x="11" y="12" width="3" height="1" fill="#b8d4f8"/><rect x="5" y="0" width="0.8" height="3" fill="#333"/><path d="M5.8 0 H8.5 L9.5 1.2 L8.5 1.8 H5.8 Z" fill="#e01010"/></svg>
<svg style="position:absolute;left:65px;top:187px" width="16" height="16" viewBox="0 0 16 16"><rect x="0.5" y="1.5" width="3" height="14" fill="#f4f4f4" stroke="#8a8a8a"/><path d="M0.5 4 H3.5 M0.5 7 H3.5 M0.5 10 H3.5 M0.5 13 H3.5" stroke="#8a8a8a"/><rect x="3" y="1.5" width="9" height="1" fill="#8a8a8a"/><circle cx="1.5" cy="1" r="1" fill="#8a50e0"/><rect x="12.5" y="1" width="1.2" height="4" fill="#8a50e0"/><path d="M3.5 9 L8.5 2.5 L14.5 9 Z" fill="#b080f0"/><path d="M4 9 L8.5 3 L13 9" stroke="#4a1a60" fill="none" stroke-width=".8"/><rect x="3.5" y="8" width="11.5" height="2.5" fill="#f07010"/><rect x="3.5" y="10" width="11.5" height="1" fill="#603020"/><rect x="6" y="11" width="4" height="5" fill="#3a8af0"/><rect x="11" y="11" width="4" height="5" fill="#3a8af0"/><path d="M6 13.5 H10 M11 13.5 H15 M8 11 V16 M13 11 V16" stroke="#fff" stroke-width=".6"/></svg>
<svg style="position:absolute;left:65px;top:219px" width="16" height="16" viewBox="0 0 16 16"><rect x="0.5" y="1.5" width="3" height="14" fill="#f4f4f4" stroke="#8a8a8a"/><path d="M0.5 4 H3.5 M0.5 7 H3.5 M0.5 10 H3.5 M0.5 13 H3.5" stroke="#8a8a8a"/><rect x="3" y="1.5" width="9" height="1" fill="#8a8a8a"/><circle cx="1.5" cy="1" r="1" fill="#8a50e0"/><rect x="12.5" y="1" width="1.2" height="4" fill="#8a50e0"/><path d="M3.5 9 L8.5 2.5 L14.5 9 Z" fill="#b080f0"/><path d="M4 9 L8.5 3 L13 9" stroke="#4a1a60" fill="none" stroke-width=".8"/><rect x="3.5" y="8" width="11.5" height="2.5" fill="#f07010"/><rect x="3.5" y="10" width="11.5" height="1" fill="#603020"/><rect x="6" y="11" width="4" height="5" fill="#3a8af0"/><rect x="11" y="11" width="4" height="5" fill="#3a8af0"/><path d="M6 13.5 H10 M11 13.5 H15 M8 11 V16 M13 11 V16" stroke="#fff" stroke-width=".6"/></svg>
<svg style="position:absolute;left:65px;top:235px" width="16" height="16" viewBox="0 0 16 16"><rect x="0.5" y="1.5" width="3" height="14" fill="#f4f4f4" stroke="#8a8a8a"/><path d="M0.5 4 H3.5 M0.5 7 H3.5 M0.5 10 H3.5 M0.5 13 H3.5" stroke="#8a8a8a"/><rect x="3" y="1.5" width="9" height="1" fill="#8a8a8a"/><circle cx="1.5" cy="1" r="1" fill="#8a50e0"/><rect x="12.5" y="1" width="1.2" height="4" fill="#8a50e0"/><path d="M3.5 9 L8.5 2.5 L14.5 9 Z" fill="#b080f0"/><path d="M4 9 L8.5 3 L13 9" stroke="#4a1a60" fill="none" stroke-width=".8"/><rect x="3.5" y="8" width="11.5" height="2.5" fill="#f07010"/><rect x="3.5" y="10" width="11.5" height="1" fill="#603020"/><rect x="6" y="11" width="4" height="5" fill="#3a8af0"/><rect x="11" y="11" width="4" height="5" fill="#3a8af0"/><path d="M6 13.5 H10 M11 13.5 H15 M8 11 V16 M13 11 V16" stroke="#fff" stroke-width=".6"/></svg>
<svg style="position:absolute;left:83px;top:203px" width="16" height="16" viewBox="0 0 16 16"><path d="M0 8 L7 1 L16 6 L9 13 Z" fill="#3a9a58"/><path d="M0 8 L9 13 L9 15.5 L0 10.5 Z" fill="#d8dde8"/><path d="M9 13 L16 6 V8.5 L9 15.5 Z" fill="#b8c0cc"/><path d="M6 4 L10 6" stroke="#e0f8e8" stroke-width="1.3"/></svg>
<svg style="position:absolute;left:45px;top:252px" width="16" height="14" viewBox="0 0 16 14"><defs><linearGradient id="fg" x1="0" y1="1" x2="1" y2="0"><stop offset="0" stop-color="#ffff00"/><stop offset=".55" stop-color="#ffd000"/><stop offset="1" stop-color="#ff8000"/></linearGradient></defs><path d="M0.5 0.5 H6 L7 2 H15.5 V13.5 H0.5 Z" fill="#f8d840" stroke="#9090a0"/><rect x="1" y="2.5" width="14.5" height="11" fill="url(#fg)"/></svg>
<svg style="position:absolute;left:44px;top:268px" width="16" height="15" viewBox="0 0 16 15"><path d="M3.5 0.5 H8 L9 2 H14.5 V10 H3.5 Z" fill="#f8e070" stroke="#a0a0b0" stroke-width=".8"/><rect x="4" y="3" width="10" height="6" fill="#fce890"/><path d="M0 7 Q3 8 5 8 Q9 8 14 8 Q12 13 7 13 Q3 13 0 7 Z" fill="#f0a060"/><path d="M4 10 Q8 11 12 9" stroke="#fff" stroke-width=".8" fill="none"/><rect x="15" y="6.5" width="1" height="7" fill="#333"/></svg>
<svg style="position:absolute;left:47px;top:284px" width="11" height="15" viewBox="0 0 11 15"><path d="M2 3 Q5 0 8 3" stroke="#a0c0e0" fill="#e0f0ff"/><rect x="1" y="4" width="9" height="2" fill="#50607a"/><rect x="0" y="7" width="11" height="1.5" fill="#50607a"/><path d="M2 5 H9 L8.5 14.5 H2.5 Z" fill="#4a5a74"/><path d="M3 6 L8 14 M8 6 L3 14 M2.5 8 H8.5 M2.5 10.5 H8.5 M2.5 13 H8.5" stroke="#a8b8d0" stroke-width=".6"/><rect x="1.5" y="14" width="8" height="1" fill="#3a4a60"/></svg>
<svg style="position:absolute;left:0;top:0" width="1756" height="1125" viewBox="0 0 1756 1125"><rect x="81.5" y="201.5" width="196" height="18" fill="none" stroke="#ff0000" stroke-width="3"/><rect x="519.5" y="405.5" width="145" height="20" fill="none" stroke="#ff0000" stroke-width="3"/><path d="M280 212 L500 402" stroke="#ff0000" stroke-width="4"/><path d="M516 416 L493 408 L504 395 Z" fill="#ff0000"/></svg>
</body></html>
